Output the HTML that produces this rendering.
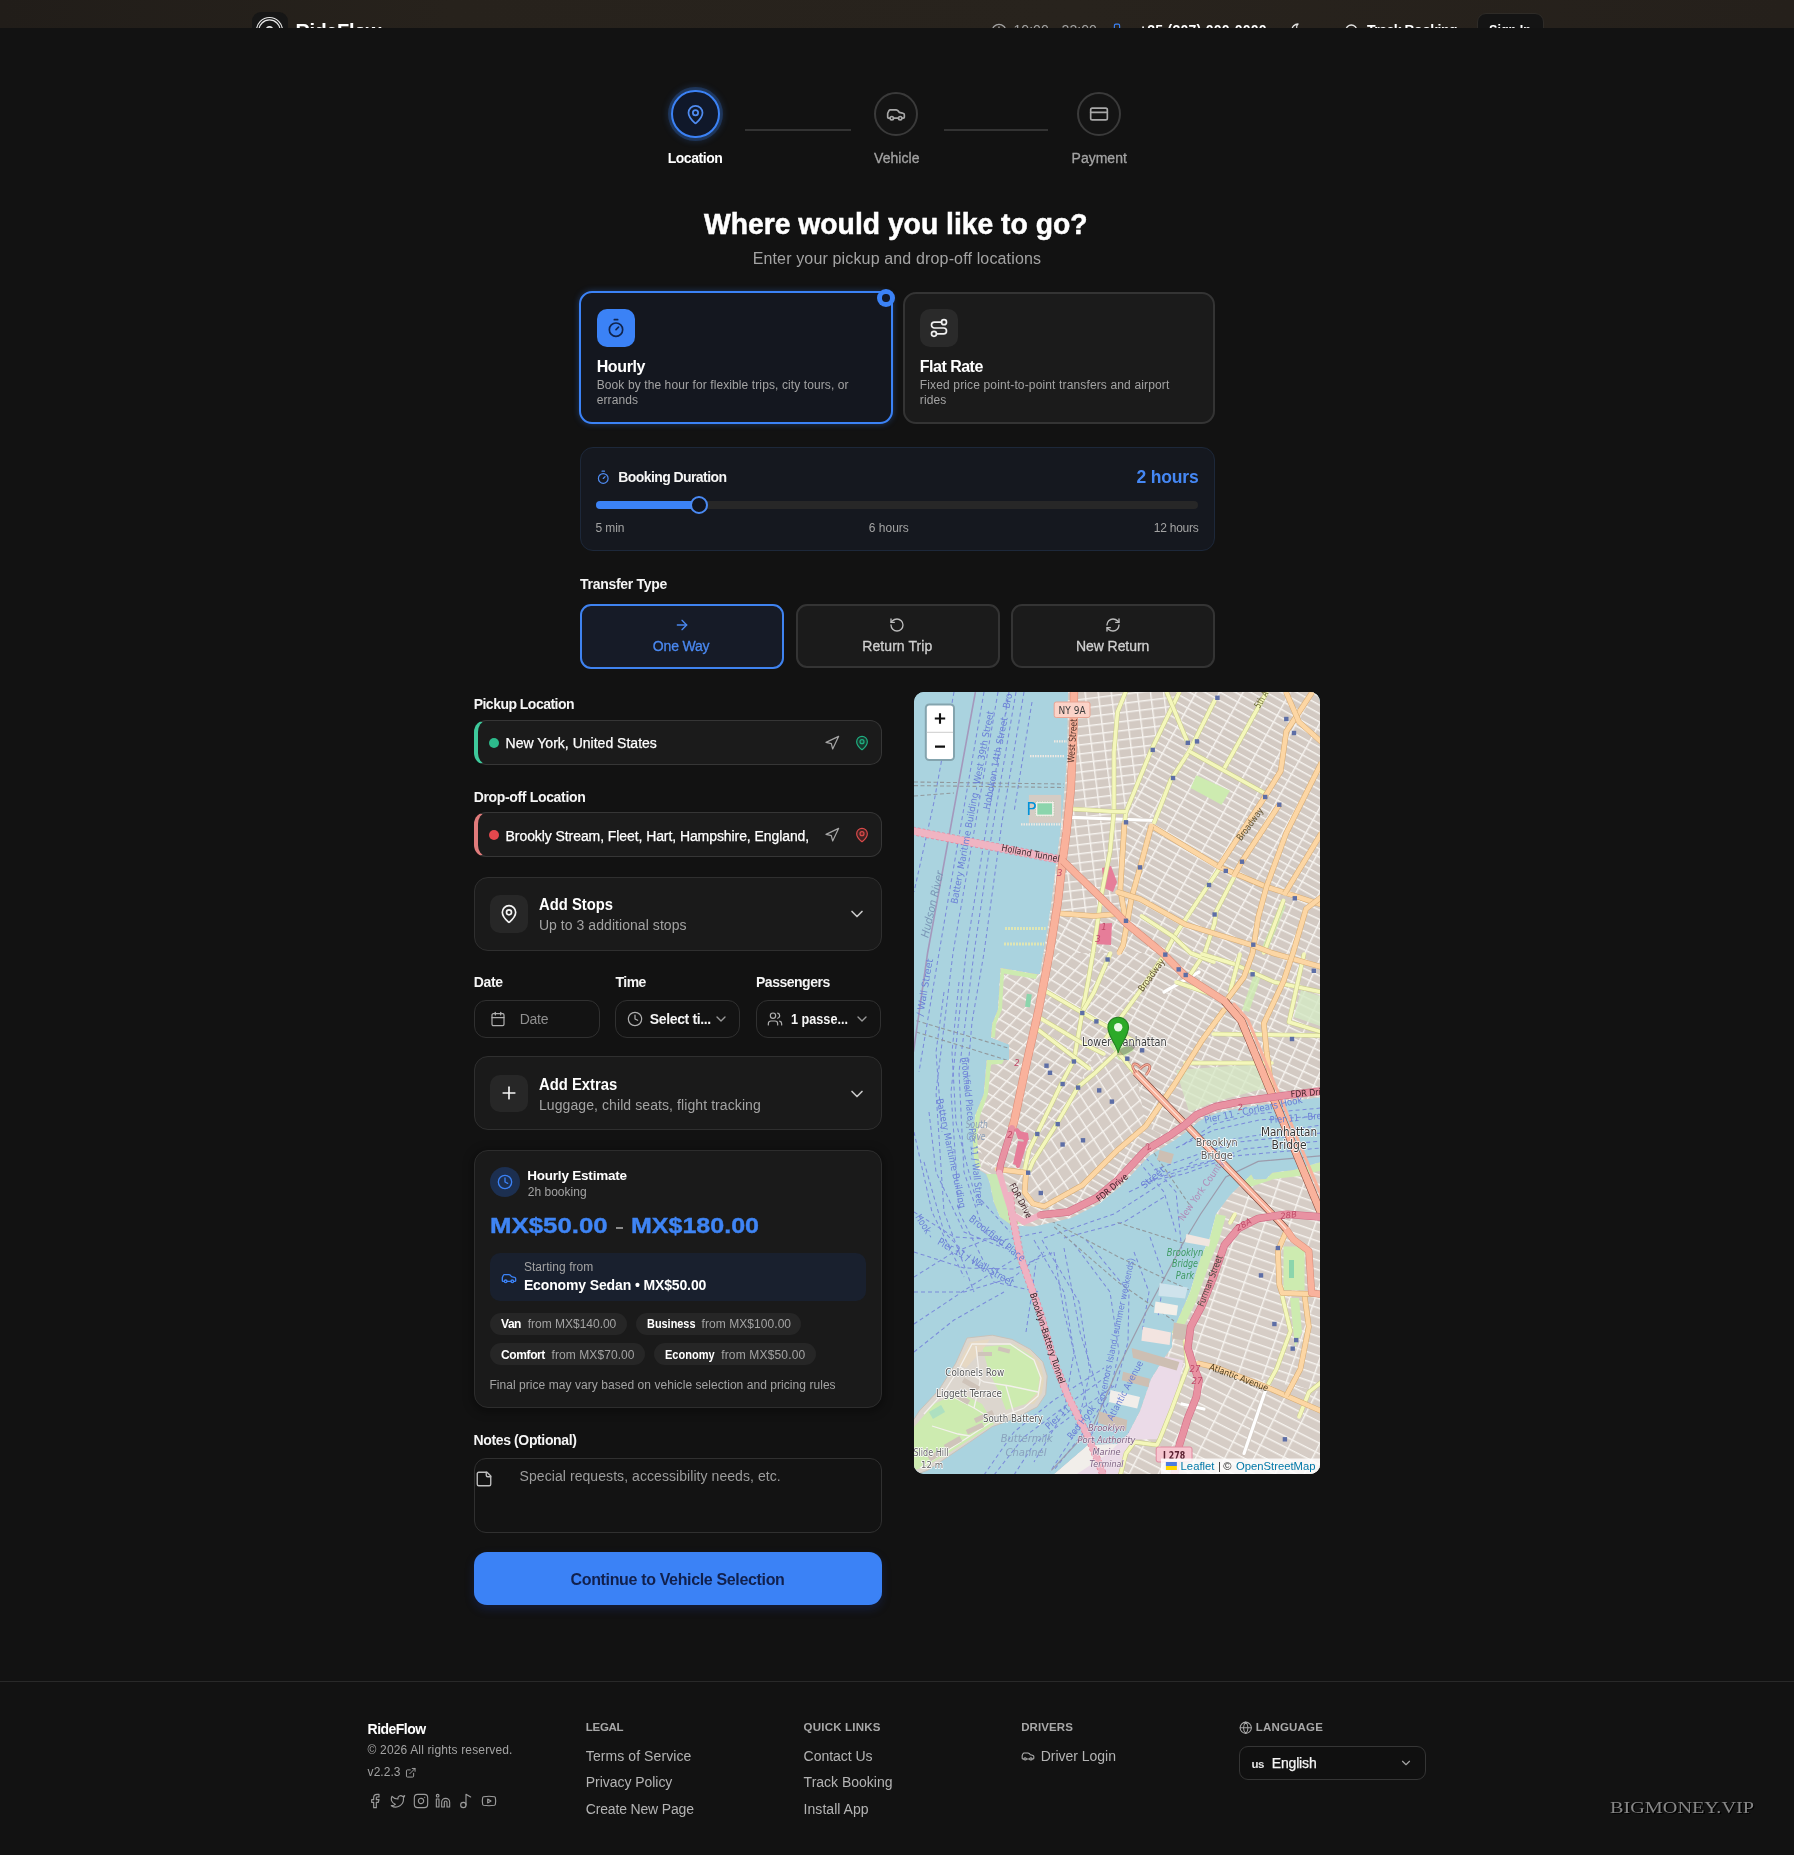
<!DOCTYPE html>
<html lang="en"><head><meta charset="utf-8"><title>RideFlow - Book a ride</title>
<style>
html,body{margin:0;padding:0;background:#121212;width:1794px;height:1855px;}
body{position:relative;font-family:"Liberation Sans",sans-serif;}
#pg{position:absolute;left:0;top:0;width:1794px;height:1855px;overflow:hidden;background:#121212;will-change:transform;}
#pg div,#pg svg,#pg span{position:absolute;box-sizing:border-box;}
#pg span{white-space:pre;line-height:1;}
#pg .serif{font-family:"Liberation Serif",serif;}
#map svg{position:static;}
#map text{font-family:"DejaVu Sans","Liberation Sans",sans-serif;}
</style></head>
<body>
<div id="pg">
<div style="left:0;top:0;width:1794px;height:28px;overflow:hidden;background:linear-gradient(90deg,#211d19 0%,#27221c 25%,#28231d 60%,#25201b 100%);">
<div style="left:252px;top:11.6px;width:36px;height:36px;border-radius:9px;background:#161616;"></div>
<svg style="left:254px;top:14.6px" width="31" height="31" viewBox="0 0 31 31" fill="none" stroke="#e8e8e8"><circle cx="15.5" cy="15.5" r="13" stroke-width="1.2"/><circle cx="15.5" cy="15.5" r="10.6" stroke-width="1.2"/><circle cx="15.5" cy="15.5" r="3.6" stroke-width="1.6"/></svg>
<span style="left:295.40px;top:20.63px;font-size:20px;font-weight:700;color:#ffffff;letter-spacing:-0.411px;">RideFlow</span>
<svg style="left:990.7px;top:22.6px;" width="16" height="16" viewBox="0 0 24 24" fill="none" stroke="#a3a3a3" stroke-width="2" stroke-linecap="round" stroke-linejoin="round"><circle cx="12" cy="12" r="10"/><polyline points="12 6 12 12 16 14"/></svg>
<span style="left:1013.40px;top:23.36px;font-size:14px;font-weight:400;color:#a3a3a3;letter-spacing:0.083px;">10:00 - 22:00</span>
<svg style="left:1109.7px;top:23.4px;" width="14" height="14" viewBox="0 0 24 24" fill="none" stroke="#3b82f6" stroke-width="2" stroke-linecap="round" stroke-linejoin="round"><rect width="9" height="20" x="7.5" y="2" rx="2.5"/></svg>
<span style="left:1138.90px;top:23.36px;font-size:14px;font-weight:700;color:#ffffff;letter-spacing:0.257px;">+25 (207) 000-0000</span>
<svg style="left:1290.0px;top:22.4px;" width="16" height="16" viewBox="0 0 24 24" fill="none" stroke="#e5e5e5" stroke-width="2" stroke-linecap="round" stroke-linejoin="round"><path d="M12 3a6 6 0 0 0 9 9 9 9 0 1 1-9-9Z"/></svg>
<svg style="left:1343.5px;top:23.0px;" width="16" height="16" viewBox="0 0 24 24" fill="none" stroke="#e5e5e5" stroke-width="2" stroke-linecap="round" stroke-linejoin="round"><circle cx="11" cy="11" r="8"/><path d="m21 21-4.300-4.300"/></svg>
<span style="left:1367.00px;top:23.36px;font-size:14px;font-weight:700;color:#ffffff;letter-spacing:-0.498px;">Track Booking</span>
<div style="left:1476.5px;top:13.4px;width:67px;height:34px;border-radius:9px;background:#141414;border:1px solid #2e2b27;"></div>
<span style="left:1488.70px;top:23.36px;font-size:14px;font-weight:700;color:#ffffff;transform:scaleX(0.8999);transform-origin:0 50%;">Sign In</span>
</div>
<div style="left:671.4px;top:90.1px;width:48.4px;height:48.4px;border-radius:50%;border:2px solid #3b82f6;background:#10182a;box-shadow:0 0 0 3px rgba(59,130,246,.22),0 0 7px 3px rgba(59,130,246,.22);"></div>
<svg style="left:685.1px;top:104.0px;" width="21" height="21" viewBox="0 0 24 24" fill="none" stroke="#4f8bf0" stroke-width="2" stroke-linecap="round" stroke-linejoin="round"><path d="M20 10c0 4.993-5.539 10.193-7.399 11.799a1 1 0 0 1-1.202 0C9.539 20.193 4 14.993 4 10a8 8 0 0 1 16 0"/><circle cx="12" cy="10" r="3"/></svg>
<div style="left:874.4px;top:92.4px;width:44px;height:44px;border-radius:50%;border:2px solid #3a3a3a;background:#141414;"></div>
<svg style="left:886.4px;top:104.4px;" width="20" height="20" viewBox="0 0 24 24" fill="none" stroke="#a8a8a8" stroke-width="2" stroke-linecap="round" stroke-linejoin="round"><path d="M19 17h2c.6 0 1-.4 1-1v-3c0-.9-.7-1.700-1.500-1.900C18.700 10.600 16 10 16 10s-1.300-1.400-2.200-2.300c-.5-.4-1.100-.7-1.800-.7H5c-.6 0-1.100.4-1.400.9l-1.400 2.900A3.700 3.700 0 0 0 2 12v4c0 .6.400 1 1 1h2"/><circle cx="7" cy="17" r="2"/><path d="M9 17h6"/><circle cx="17" cy="17" r="2"/></svg>
<div style="left:1076.5px;top:92.4px;width:44px;height:44px;border-radius:50%;border:2px solid #3a3a3a;background:#141414;"></div>
<svg style="left:1088.5px;top:104.4px;" width="20" height="20" viewBox="0 0 24 24" fill="none" stroke="#a8a8a8" stroke-width="2" stroke-linecap="round" stroke-linejoin="round"><rect width="20" height="14" x="2" y="5" rx="2"/><line x1="2" x2="22" y1="10" y2="10"/></svg>
<div style="left:745.4px;top:128.5px;width:105.6px;height:2.0px;background:#333;"></div>
<div style="left:943.5px;top:128.5px;width:104.7px;height:2.0px;background:#333;"></div>
<span style="left:667.65px;top:150.96px;font-size:14px;font-weight:700;color:#ffffff;letter-spacing:-0.455px;">Location</span>
<span style="left:874.05px;top:150.96px;font-size:14px;font-weight:400;color:#a3a3a3;letter-spacing:0.049px;-webkit-text-stroke:0.3px currentColor;">Vehicle</span>
<span style="left:1071.60px;top:150.96px;font-size:14px;font-weight:400;color:#a3a3a3;letter-spacing:-0.007px;-webkit-text-stroke:0.3px currentColor;">Payment</span>
<span style="left:704.45px;top:208.69px;font-size:29.5px;font-weight:700;color:#ffffff;transform:scaleX(0.9590);transform-origin:0 50%;-webkit-text-stroke:0.5px #fff;">Where would you like to go?</span>
<span style="left:752.65px;top:250.88px;font-size:16px;font-weight:400;color:#a3a3a3;letter-spacing:0.149px;">Enter your pickup and drop-off locations</span>
<div style="left:579.2px;top:291.4px;width:313.7px;height:133px;border-radius:13px;border:2px solid #3b82f6;background:#14171f;box-shadow:0 0 6px rgba(59,130,246,.35);"></div>
<div style="left:596.7px;top:308.9px;width:38.2px;height:38.2px;border-radius:10px;background:#3b82f6;"></div>
<svg style="left:605.8px;top:317.6px;" width="20" height="20" viewBox="0 0 24 24" fill="none" stroke="#10244d" stroke-width="2" stroke-linecap="round" stroke-linejoin="round"><line x1="10" x2="14" y1="2" y2="2"/><line x1="12" x2="15" y1="14" y2="11"/><circle cx="12" cy="14" r="8"/></svg>
<div style="left:876.8px;top:288.7px;width:18.4px;height:18.4px;border-radius:50%;background:#3b82f6;"></div>
<div style="left:882.3px;top:294.2px;width:7.4px;height:7.4px;border-radius:50%;background:#121827;"></div>
<span style="left:596.70px;top:359.18px;font-size:16px;font-weight:700;color:#ffffff;letter-spacing:-0.379px;">Hourly</span>
<span style="left:596.70px;top:379.14px;font-size:12px;font-weight:400;color:#a3a3a3;letter-spacing:0.102px;">Book by the hour for flexible trips, city tours, or</span>
<span style="left:596.70px;top:393.94px;font-size:12px;font-weight:400;color:#a3a3a3;letter-spacing:0.1px;">errands</span>
<div style="left:903.3px;top:292.4px;width:311.8px;height:131.9px;border-radius:13px;border:2px solid #343434;background:#1b1b1b;"></div>
<div style="left:920.2px;top:308.9px;width:37.8px;height:38.2px;border-radius:10px;background:#2a2a2a;"></div>
<svg style="left:929.1px;top:318.0px;" width="20" height="20" viewBox="0 0 24 24" fill="none" stroke="#f0f0f0" stroke-width="2" stroke-linecap="round" stroke-linejoin="round"><circle cx="6" cy="19" r="3"/><path d="M9 19h8.500a3.500 3.500 0 0 0 0-7h-11a3.500 3.500 0 0 1 0-7H15"/><circle cx="18" cy="5" r="3"/></svg>
<span style="left:919.80px;top:359.18px;font-size:16px;font-weight:700;color:#ffffff;letter-spacing:-0.509px;">Flat Rate</span>
<span style="left:919.80px;top:379.14px;font-size:12px;font-weight:400;color:#a3a3a3;letter-spacing:0.142px;">Fixed price point-to-point transfers and airport</span>
<span style="left:919.80px;top:393.94px;font-size:12px;font-weight:400;color:#a3a3a3;letter-spacing:0.1px;">rides</span>
<div style="left:580.1px;top:447.4px;width:635px;height:103.9px;border-radius:13px;border:1px solid #1d283a;background:#15181f;"></div>
<svg style="left:595.9px;top:469.6px;" width="14.5" height="14.5" viewBox="0 0 24 24" fill="none" stroke="#4f8bf0" stroke-width="2" stroke-linecap="round" stroke-linejoin="round"><line x1="10" x2="14" y1="2" y2="2"/><line x1="12" x2="15" y1="14" y2="11"/><circle cx="12" cy="14" r="8"/></svg>
<span style="left:618.20px;top:469.96px;font-size:14px;font-weight:700;color:#f5f5f5;letter-spacing:-0.577px;">Booking Duration</span>
<span style="left:1136.50px;top:468.75px;font-size:17.5px;font-weight:700;color:#4587f3;letter-spacing:-0.174px;">2 hours</span>
<div style="left:595.8px;top:501.3px;width:602.7px;height:8.0px;border-radius:4px;background:#272727;"></div>
<div style="left:595.8px;top:501.3px;width:103.0px;height:8.0px;border-radius:4px;background:#3b82f6;"></div>
<div style="left:690.3px;top:496.1px;width:18px;height:18px;border-radius:50%;border:2px solid #4a8af4;background:#10141f;"></div>
<span style="left:595.40px;top:522.34px;font-size:12px;font-weight:400;color:#a3a3a3;letter-spacing:-0.069px;">5 min</span>
<span style="left:868.80px;top:522.34px;font-size:12px;font-weight:400;color:#a3a3a3;">6 hours</span>
<span style="left:1153.80px;top:522.34px;font-size:12px;font-weight:400;color:#a3a3a3;letter-spacing:-0.250px;">12 hours</span>
<span style="left:580.10px;top:576.76px;font-size:14px;font-weight:700;color:#f5f5f5;letter-spacing:-0.291px;">Transfer Type</span>
<div style="left:580.1px;top:604px;width:203.8px;height:64.9px;border-radius:11px;border:2px solid #3f83f0;background:#161b27;"></div>
<svg style="left:674.0px;top:617.3px;" width="16" height="16" viewBox="0 0 24 24" fill="none" stroke="#4a88f0" stroke-width="2" stroke-linecap="round" stroke-linejoin="round"><path d="M5 12h14"/><path d="m12 5 7 7-7 7"/></svg>
<span style="left:652.85px;top:639.36px;font-size:14px;font-weight:400;color:#4a88f0;letter-spacing:-0.192px;-webkit-text-stroke:0.3px currentColor;">One Way</span>
<div style="left:795.6px;top:604.4px;width:204.4px;height:64px;border-radius:11px;border:2px solid #343434;background:#1b1b1b;"></div>
<svg style="left:889.1px;top:617.1px;" width="16" height="16" viewBox="0 0 24 24" fill="none" stroke="#bdbdbd" stroke-width="2" stroke-linecap="round" stroke-linejoin="round"><path d="M3 12a9 9 0 1 0 9-9 9.750 9.750 0 0 0-6.740 2.740L3 8"/><path d="M3 3v5h5"/></svg>
<span style="left:862.30px;top:639.36px;font-size:14px;font-weight:400;color:#d0d0d0;letter-spacing:0.068px;-webkit-text-stroke:0.3px currentColor;">Return Trip</span>
<div style="left:1011.3px;top:604.4px;width:203.6px;height:64px;border-radius:11px;border:2px solid #343434;background:#1b1b1b;"></div>
<svg style="left:1104.6px;top:617.1px;" width="16" height="16" viewBox="0 0 24 24" fill="none" stroke="#bdbdbd" stroke-width="2" stroke-linecap="round" stroke-linejoin="round"><path d="M3 12a9 9 0 0 1 9-9 9.750 9.750 0 0 1 6.740 2.740L21 8"/><path d="M21 3v5h-5"/><path d="M21 12a9 9 0 0 1-9 9 9.750 9.750 0 0 1-6.740-2.740L3 16"/><path d="M8 16H3v5"/></svg>
<span style="left:1076.00px;top:639.36px;font-size:14px;font-weight:400;color:#d0d0d0;letter-spacing:-0.072px;-webkit-text-stroke:0.3px currentColor;">New Return</span>
<span style="left:473.70px;top:697.16px;font-size:14px;font-weight:700;color:#f5f5f5;letter-spacing:-0.522px;">Pickup Location</span>
<div style="left:473.7px;top:720.2px;width:408.3px;height:44.5px;border-radius:12px;border:1.5px solid #363636;border-left:4px solid #3ec99b;background:#1b1b1b;"></div>
<div style="left:488.7px;top:737.6px;width:10.2px;height:10.2px;border-radius:50%;background:#2dbb8c;"></div>
<span style="left:505.60px;top:736.46px;font-size:14px;font-weight:400;color:#ffffff;letter-spacing:0.014px;-webkit-text-stroke:0.25px #fff;">New York, United States</span>
<svg style="left:823.8px;top:734.6px;" width="16" height="16" viewBox="0 0 24 24" fill="none" stroke="#a6a6a6" stroke-width="1.8" stroke-linecap="round" stroke-linejoin="round"><polygon points="3 11 22 2 13 21 11 13 3 11"/></svg>
<svg style="left:853.5px;top:734.9px;" width="16" height="16" viewBox="0 0 24 24" fill="rgba(16,185,129,.18)" stroke="#1fae80" stroke-width="1.8" stroke-linecap="round" stroke-linejoin="round"><path d="M20 10c0 4.993-5.539 10.193-7.399 11.799a1 1 0 0 1-1.202 0C9.539 20.193 4 14.993 4 10a8 8 0 0 1 16 0"/><circle cx="12" cy="10" r="3"/></svg>
<span style="left:473.70px;top:789.66px;font-size:14px;font-weight:700;color:#f5f5f5;letter-spacing:-0.337px;">Drop-off Location</span>
<div style="left:473.7px;top:812.4px;width:408.3px;height:44.6px;border-radius:12px;border:1.5px solid #363636;border-left:4px solid #e07b7b;background:#1b1b1b;"></div>
<div style="left:488.7px;top:830.1px;width:10.2px;height:10.2px;border-radius:50%;background:#e4484d;"></div>
<span style="left:505.60px;top:828.96px;font-size:14px;font-weight:400;color:#ffffff;letter-spacing:-0.080px;-webkit-text-stroke:0.25px #fff;">Brookly Stream, Fleet, Hart, Hampshire, England,</span>
<svg style="left:823.8px;top:827.1px;" width="16" height="16" viewBox="0 0 24 24" fill="none" stroke="#a6a6a6" stroke-width="1.8" stroke-linecap="round" stroke-linejoin="round"><polygon points="3 11 22 2 13 21 11 13 3 11"/></svg>
<svg style="left:853.5px;top:827.4px;" width="16" height="16" viewBox="0 0 24 24" fill="rgba(239,68,68,.18)" stroke="#d94a4a" stroke-width="1.8" stroke-linecap="round" stroke-linejoin="round"><path d="M20 10c0 4.993-5.539 10.193-7.399 11.799a1 1 0 0 1-1.202 0C9.539 20.193 4 14.993 4 10a8 8 0 0 1 16 0"/><circle cx="12" cy="10" r="3"/></svg>
<div style="left:473.7px;top:877px;width:408.5px;height:73.9px;border-radius:14px;border:1px solid #2f2f2f;background:#1a1a1a;"></div>
<div style="left:490.1px;top:895.1px;width:37.6px;height:37.6px;border-radius:10px;background:#272727;"></div>
<svg style="left:498.7px;top:903.7px;" width="20" height="20" viewBox="0 0 24 24" fill="none" stroke="#f5f5f5" stroke-width="2" stroke-linecap="round" stroke-linejoin="round"><path d="M20 10c0 4.993-5.539 10.193-7.399 11.799a1 1 0 0 1-1.202 0C9.539 20.193 4 14.993 4 10a8 8 0 0 1 16 0"/><circle cx="12" cy="10" r="3"/></svg>
<span style="left:538.90px;top:896.98px;font-size:16px;font-weight:700;color:#ffffff;transform:scaleX(0.9250);transform-origin:0 50%;">Add Stops</span>
<span style="left:538.90px;top:918.16px;font-size:14px;font-weight:400;color:#a3a3a3;letter-spacing:0.057px;">Up to 3 additional stops</span>
<svg style="left:846.9px;top:904.0px;" width="20" height="20" viewBox="0 0 24 24" fill="none" stroke="#c8c8c8" stroke-width="2" stroke-linecap="round" stroke-linejoin="round"><path d="m6 9 6 6 6-6"/></svg>
<span style="left:473.70px;top:975.06px;font-size:14px;font-weight:700;color:#f5f5f5;letter-spacing:-0.340px;">Date</span>
<span style="left:615.50px;top:975.06px;font-size:14px;font-weight:700;color:#f5f5f5;letter-spacing:-0.509px;">Time</span>
<span style="left:756.00px;top:975.06px;font-size:14px;font-weight:700;color:#f5f5f5;letter-spacing:-0.491px;">Passengers</span>
<div style="left:474.2px;top:999.6px;width:125.4px;height:38px;border-radius:12px;border:1px solid #303030;background:#131313;"></div>
<svg style="left:489.6px;top:1010.8px;" width="16" height="16" viewBox="0 0 24 24" fill="none" stroke="#b0b0b0" stroke-width="1.8" stroke-linecap="round" stroke-linejoin="round"><path d="M8 2v4"/><path d="M16 2v4"/><rect width="18" height="18" x="3" y="4" rx="2"/><path d="M3 10h18"/></svg>
<span style="left:519.80px;top:1011.96px;font-size:14px;font-weight:400;color:#8f8f8f;letter-spacing:-0.295px;">Date</span>
<div style="left:615px;top:999.6px;width:125.2px;height:38px;border-radius:12px;border:1px solid #303030;background:#131313;"></div>
<svg style="left:626.5px;top:1010.8px;" width="16" height="16" viewBox="0 0 24 24" fill="none" stroke="#b0b0b0" stroke-width="1.8" stroke-linecap="round" stroke-linejoin="round"><circle cx="12" cy="12" r="10"/><polyline points="12 6 12 12 16 14"/></svg>
<span style="left:649.80px;top:1011.96px;font-size:14px;font-weight:700;color:#f5f5f5;letter-spacing:-0.363px;">Select ti...</span>
<svg style="left:712.7px;top:1011.0px;" width="16" height="16" viewBox="0 0 24 24" fill="none" stroke="#9a9a9a" stroke-width="2" stroke-linecap="round" stroke-linejoin="round"><path d="m6 9 6 6 6-6"/></svg>
<div style="left:756px;top:999.8px;width:125.4px;height:38px;border-radius:12px;border:1px solid #303030;background:#131313;"></div>
<svg style="left:767.3px;top:1011.0px;" width="16" height="16" viewBox="0 0 24 24" fill="none" stroke="#b0b0b0" stroke-width="1.8" stroke-linecap="round" stroke-linejoin="round"><path d="M16 21v-2a4 4 0 0 0-4-4H6a4 4 0 0 0-4 4v2"/><circle cx="9" cy="7" r="4"/><path d="M22 21v-2a4 4 0 0 0-3-3.870"/><path d="M16 3.130a4 4 0 0 1 0 7.750"/></svg>
<span style="left:791.20px;top:1011.96px;font-size:14px;font-weight:700;color:#f5f5f5;transform:scaleX(0.9041);transform-origin:0 50%;">1 passe...</span>
<svg style="left:853.7px;top:1011.0px;" width="16" height="16" viewBox="0 0 24 24" fill="none" stroke="#9a9a9a" stroke-width="2" stroke-linecap="round" stroke-linejoin="round"><path d="m6 9 6 6 6-6"/></svg>
<div style="left:473.7px;top:1056.4px;width:408.5px;height:73.9px;border-radius:14px;border:1px solid #2f2f2f;background:#1a1a1a;"></div>
<div style="left:490.1px;top:1074.8px;width:37.6px;height:37.6px;border-radius:10px;background:#272727;"></div>
<svg style="left:498.7px;top:1083.4px;" width="20" height="20" viewBox="0 0 24 24" fill="none" stroke="#f5f5f5" stroke-width="2" stroke-linecap="round" stroke-linejoin="round"><path d="M5 12h14"/><path d="M12 5v14"/></svg>
<span style="left:538.90px;top:1076.68px;font-size:16px;font-weight:700;color:#ffffff;transform:scaleX(0.9270);transform-origin:0 50%;">Add Extras</span>
<span style="left:538.90px;top:1097.96px;font-size:14px;font-weight:400;color:#a3a3a3;letter-spacing:0.089px;">Luggage, child seats, flight tracking</span>
<svg style="left:846.9px;top:1083.6px;" width="20" height="20" viewBox="0 0 24 24" fill="none" stroke="#c8c8c8" stroke-width="2" stroke-linecap="round" stroke-linejoin="round"><path d="m6 9 6 6 6-6"/></svg>
<div style="left:473.7px;top:1149.5px;width:408.7px;height:258.3px;border-radius:14px;border:1px solid #2d2d2d;background:#1a1a1a;box-shadow:0 2px 10px 2px rgba(0,0,0,.35);"></div>
<div style="left:490.1px;top:1167.4px;width:29.8px;height:29.8px;border-radius:50%;background:#1c2f50;"></div>
<svg style="left:497.0px;top:1174.3px;" width="16" height="16" viewBox="0 0 24 24" fill="none" stroke="#3b82f6" stroke-width="2" stroke-linecap="round" stroke-linejoin="round"><circle cx="12" cy="12" r="10"/><polyline points="12 6 12 12 16 14"/></svg>
<span style="left:527.20px;top:1168.91px;font-size:13.5px;font-weight:700;color:#ffffff;letter-spacing:-0.205px;">Hourly Estimate</span>
<span style="left:527.70px;top:1185.74px;font-size:12px;font-weight:400;color:#a3a3a3;letter-spacing:0.028px;">2h booking</span>
<span style="left:489.70px;top:1214.51px;font-size:22.5px;font-weight:700;color:#3f85f5;transform:scaleX(1.1474);transform-origin:0 50%;-webkit-text-stroke:0.4px #3f85f5;">MX$50.00</span>
<div style="left:615.5px;top:1227.3px;width:7.5px;height:1.8px;background:#8a8a8a;"></div>
<span style="left:631.40px;top:1214.51px;font-size:22.5px;font-weight:700;color:#3f85f5;transform:scaleX(1.1121);transform-origin:0 50%;-webkit-text-stroke:0.4px #3f85f5;">MX$180.00</span>
<div style="left:490.1px;top:1252.7px;width:376px;height:48.5px;border-radius:10px;background:#19202e;"></div>
<svg style="left:500.9px;top:1269.6px;" width="16" height="16" viewBox="0 0 24 24" fill="none" stroke="#3b82f6" stroke-width="2" stroke-linecap="round" stroke-linejoin="round"><path d="M19 17h2c.6 0 1-.4 1-1v-3c0-.9-.7-1.700-1.500-1.900C18.700 10.600 16 10 16 10s-1.300-1.400-2.200-2.300c-.5-.4-1.100-.7-1.800-.7H5c-.6 0-1.100.4-1.400.9l-1.400 2.900A3.700 3.700 0 0 0 2 12v4c0 .6.400 1 1 1h2"/><circle cx="7" cy="17" r="2"/><path d="M9 17h6"/><circle cx="17" cy="17" r="2"/></svg>
<span style="left:523.90px;top:1261.14px;font-size:12px;font-weight:400;color:#a3a3a3;letter-spacing:0.061px;">Starting from</span>
<span style="left:523.90px;top:1277.66px;font-size:14px;font-weight:700;color:#ffffff;letter-spacing:-0.130px;">Economy Sedan &bull; MX$50.00</span>
<div style="left:490.1px;top:1312.9px;width:137.4px;height:22.4px;border-radius:11.2px;background:#262626;"></div>
<span style="left:501.00px;top:1318.44px;font-size:12px;font-weight:700;color:#ffffff;letter-spacing:-0.453px;">Van</span>
<span style="left:527.70px;top:1318.44px;font-size:12px;font-weight:400;color:#a3a3a3;letter-spacing:-0.008px;">from MX$140.00</span>
<div style="left:635.9px;top:1312.9px;width:165.5px;height:22.4px;border-radius:11.2px;background:#262626;"></div>
<span style="left:646.90px;top:1318.44px;font-size:12px;font-weight:700;color:#ffffff;transform:scaleX(0.9089);transform-origin:0 50%;">Business</span>
<span style="left:701.60px;top:1318.44px;font-size:12px;font-weight:400;color:#a3a3a3;letter-spacing:0.056px;">from MX$100.00</span>
<div style="left:490.1px;top:1343.1px;width:155.2px;height:22.4px;border-radius:11.2px;background:#262626;"></div>
<span style="left:501.00px;top:1348.64px;font-size:12px;font-weight:700;color:#ffffff;letter-spacing:-0.382px;">Comfort</span>
<span style="left:551.60px;top:1348.64px;font-size:12px;font-weight:400;color:#a3a3a3;letter-spacing:0.073px;">from MX$70.00</span>
<div style="left:654px;top:1343.1px;width:162.1px;height:22.4px;border-radius:11.2px;background:#262626;"></div>
<span style="left:665.30px;top:1348.64px;font-size:12px;font-weight:700;color:#ffffff;transform:scaleX(0.9201);transform-origin:0 50%;">Economy</span>
<span style="left:721.20px;top:1348.64px;font-size:12px;font-weight:400;color:#a3a3a3;letter-spacing:0.166px;">from MX$50.00</span>
<span style="left:489.40px;top:1378.94px;font-size:12px;font-weight:400;color:#a3a3a3;letter-spacing:0.053px;">Final price may vary based on vehicle selection and pricing rules</span>
<span style="left:473.50px;top:1433.06px;font-size:14px;font-weight:700;color:#f5f5f5;letter-spacing:-0.368px;">Notes (Optional)</span>
<div style="left:474px;top:1457.8px;width:408.4px;height:74.8px;border-radius:12px;border:1px solid #303030;background:#131313;"></div>
<svg style="left:474.7px;top:1469.7px;" width="18" height="18" viewBox="0 0 24 24" fill="none" stroke="#c0c0c0" stroke-width="1.8" stroke-linecap="round" stroke-linejoin="round"><path d="M16 3H5a2 2 0 0 0-2 2v14a2 2 0 0 0 2 2h14a2 2 0 0 0 2-2V8Z"/><path d="M15 3v4a2 2 0 0 0 2 2h4"/></svg>
<span style="left:519.60px;top:1469.06px;font-size:14px;font-weight:400;color:#9c9c9c;letter-spacing:0.066px;">Special requests, accessibility needs, etc.</span>
<div style="left:474px;top:1552.3px;width:408.4px;height:53.2px;border-radius:13px;background:#3b82f6;box-shadow:0 4px 10px rgba(30,64,175,.25);"></div>
<span style="left:570.50px;top:1572.38px;font-size:16px;font-weight:700;color:#11204d;letter-spacing:-0.346px;">Continue to Vehicle Selection</span>
<div id="map" style="left:913.5px;top:691.8px;width:406.5px;height:782px;border-radius:10px;overflow:hidden;background:#aad3df;"><svg width="407" height="782" viewBox="0 0 407 782" style="display:block"><defs><pattern id="gm" width="20.5" height="7.4" patternUnits="userSpaceOnUse" patternTransform="rotate(29) translate(0.3,-0.9)"><rect width="20.5" height="7.4" fill="#d3cac3"/><rect width="20.5" height="1.45" fill="#f6f3ef"/><rect width="1.4" height="7.4" fill="#f6f3ef"/></pattern><pattern id="gw" width="13" height="9" patternUnits="userSpaceOnUse" patternTransform="rotate(-7)"><rect width="13" height="9" fill="#d3cac3"/><rect width="13" height="1.45" fill="#f6f3ef"/><rect width="1.4" height="9" fill="#f6f3ef"/></pattern><pattern id="gt" width="12" height="10" patternUnits="userSpaceOnUse" patternTransform="rotate(30) skewX(-12)"><rect width="12" height="10" fill="#d3cac3"/><rect width="12" height="1.45" fill="#f6f3ef"/><rect width="1.4" height="10" fill="#f6f3ef"/></pattern><pattern id="gb" width="24" height="9" patternUnits="userSpaceOnUse" patternTransform="rotate(19)"><rect width="24" height="9" fill="#d6cdc6"/><rect width="24" height="1.45" fill="#f6f3ef"/><rect width="1.4" height="9" fill="#f6f3ef"/></pattern><pattern id="gc" width="26" height="9.5" patternUnits="userSpaceOnUse" patternTransform="rotate(27)"><rect width="26" height="9.5" fill="#d6cdc6"/><rect width="26" height="1.45" fill="#f6f3ef"/><rect width="1.4" height="9.5" fill="#f6f3ef"/></pattern><pattern id="gf" width="14" height="12" patternUnits="userSpaceOnUse" patternTransform="rotate(58) skewX(8)"><rect width="14" height="12" fill="#d5ccc5"/><rect width="14" height="1.4" fill="#f6f3ef"/><rect width="1.4" height="12" fill="#f6f3ef"/></pattern><pattern id="gl" width="16" height="8.5" patternUnits="userSpaceOnUse" patternTransform="rotate(25)"><rect width="16" height="8.5" fill="#d3cac3"/><rect width="16" height="1.45" fill="#f6f3ef"/><rect width="1.4" height="8.5" fill="#f6f3ef"/></pattern><clipPath id="cm"><path d="M154.0,-2.0 L153.5,60.0 L150.5,100.0 L146.5,140.0 L142.5,169.0 L137.5,211.0 L129.5,261.0 L126.0,282.0 L123.3,282.3 L86.7,276.0 L84.0,317.5 L78.3,331.5 L77.0,345.6 L95.0,352.6 L95.0,368.0 L72.7,368.1 L69.8,401.9 L61.4,423.0 L58.6,444.1 L60.0,465.2 L62.8,476.5 L72.0,482.0 L75.5,490.0 L79.7,510.0 L86.0,525.0 L98.0,533.5 L120.0,534.5 L140.0,530.0 L157.0,526.0 L185.0,512.0 L207.0,494.0 L235.0,464.0 L260.0,448.5 L274.0,438.5 L285.0,429.0 L304.0,420.5 L331.0,415.0 L373.0,409.3 L409.0,405.0 L409.0,-2.0Z"/></clipPath><clipPath id="cb"><path d="M409.0,469.4 L379.4,477.9 L358.3,480.7 L352.0,487.0 L340.0,487.5 L337.2,482.5 L327.3,492.0 L316.0,503.2 L302.0,522.0 L296.0,545.0 L287.0,565.0 L282.0,580.0 L276.0,600.0 L265.0,625.0 L258.0,640.0 L258.0,655.0 L251.3,664.3 L237.0,687.0 L226.0,719.0 L214.0,742.0 L203.5,752.0 L174.0,753.0 L138.0,784.0 L409.0,784.0Z"/></clipPath></defs><rect width="407" height="782" fill="#aad3df"/><g fill="none" stroke="#7684da" stroke-width="1.05" stroke-dasharray="4 3" opacity=".9"><path d="M84.0,0.0 L60.0,140.0 L39.0,261.0 L22.0,400.0 L30.0,520.0 L60.0,600.0"/><path d="M102.0,0.0 L78.0,140.0 L60.0,261.0 L45.0,380.0 L50.0,480.0 L70.0,540.0 L98.0,560.0"/><path d="M70.0,0.0 L44.0,150.0 L25.0,261.0 L5.0,380.0"/><path d="M95.0,0.0 L70.0,150.0 L52.0,261.0 L37.0,400.0 L45.0,520.0 L80.0,590.0 L125.0,600.0"/><path d="M110.0,0.0 L88.0,130.0 L70.0,261.0 L58.0,330.0 L52.0,400.0"/><path d="M118.0,10.0 L100.0,120.0"/><path d="M40.0,0.0 L20.0,110.0 L0.0,200.0"/><path d="M270.0,452.0 L300.0,432.0 L340.0,422.0 L407.0,416.0"/><path d="M275.0,472.0 L320.0,447.0 L407.0,433.0"/><path d="M250.0,484.0 L290.0,472.0 L330.0,457.0 L407.0,449.0"/><path d="M215.0,500.0 L260.0,478.0 L300.0,468.0"/><path d="M130.0,546.0 L200.0,522.0 L262.0,482.0"/><path d="M140.0,560.0 L150.0,620.0 L170.0,700.0 L182.0,760.0"/><path d="M150.0,556.0 L166.0,640.0 L186.0,705.0 L200.0,740.0"/><path d="M160.0,552.0 L196.0,600.0 L205.0,660.0 L196.0,700.0 L170.0,740.0 L140.0,778.0"/><path d="M172.0,548.0 L215.0,600.0 L214.0,650.0 L200.0,700.0 L176.0,745.0"/><path d="M0.0,632.0 L60.0,592.0 L112.0,560.0"/><path d="M0.0,560.0 L50.0,576.0 L100.0,577.0 L140.0,560.0"/><path d="M0.0,585.0 L40.0,560.0 L80.0,545.0"/><path d="M100.0,783.0 L120.0,752.0 L160.0,722.0 L200.0,694.0"/><path d="M80.0,783.0 L110.0,745.0 L150.0,715.0 L196.0,682.0"/><path d="M10.0,470.0 L30.0,540.0 L70.0,580.0"/><path d="M0.0,440.0 L18.0,520.0 L50.0,585.0"/><path d="M112.0,640.0 L118.0,600.0 L122.0,570.0"/><path d="M262.0,456.0 L300.0,438.0 L345.0,428.0 L407.0,424.0"/><path d="M240.0,478.0 L285.0,462.0 L325.0,450.0 L407.0,441.0"/><path d="M230.0,490.0 L270.0,482.0 L320.0,464.0 L407.0,456.0"/><path d="M225.0,470.0 L250.0,500.0 L262.0,540.0"/><path d="M232.0,466.0 L262.0,500.0 L268.0,560.0"/><path d="M150.0,546.0 L210.0,530.0 L250.0,505.0"/><path d="M120.0,548.0 L150.0,600.0 L160.0,660.0 L150.0,720.0 L120.0,770.0"/><path d="M128.0,548.0 L165.0,610.0 L176.0,680.0 L162.0,740.0 L136.0,780.0"/><path d="M0.0,600.0 L50.0,600.0 L100.0,585.0 L130.0,560.0"/><path d="M0.0,520.0 L40.0,545.0 L90.0,548.0 L128.0,540.0"/><path d="M15.0,420.0 L22.0,480.0 L50.0,540.0 L90.0,556.0"/><path d="M30.0,300.0 L22.0,360.0 L28.0,440.0"/><path d="M45.0,290.0 L38.0,360.0 L42.0,430.0 L60.0,500.0 L96.0,540.0"/><path d="M70.0,783.0 L100.0,740.0 L140.0,708.0 L190.0,676.0"/><path d="M190.0,783.0 L215.0,740.0"/><path d="M0.0,660.0 L40.0,628.0 L90.0,600.0"/><path d="M220.0,560.0 L235.0,600.0 L228.0,640.0"/><path d="M236.0,545.0 L250.0,585.0 L244.0,625.0"/></g><g fill="none" stroke="#8f9396" stroke-width="1.1" stroke-dasharray="4 2.5" opacity=".9"><path d="M0.0,90.0 L150.0,92.0"/><path d="M0.0,93.6 L150.0,95.5"/><path d="M2.3,328.7 L106.4,359.7"/><path d="M2.3,340.0 L106.4,372.3"/><path d="M137.4,529.2 L203.5,564.4 L275.0,598.0"/><path d="M140.2,534.9 L203.5,589.7 L260.0,629.0"/><path d="M203.5,530.6 L271.0,551.7"/><path d="M240.0,461.0 L277.0,515.0"/><path d="M0.0,104.0 L40.0,101.0"/></g><g fill="none" stroke="#a391b8" stroke-width="1.6" opacity=".9"><path d="M61.4,0.0 L13.6,261.0 L-0.5,359.7"/></g><g fill="none" stroke="#9a96a6" stroke-width="1.2" opacity=".9"><path d="M407.5,463.8 L344.2,469.4 L311.8,484.9 L286.5,522.2 L269.6,550.3 L231.6,620.7 L203.5,677.0 L179.6,733.2 L137.4,778.3"/></g><g stroke="#efe9e2" stroke-width="2.2" stroke-dasharray="1.5 1" fill="none"><path d="M140,49.4 L153,49.4"/><path d="M116,64.2 L150,64.2"/><path d="M107,132.4 L146,132.4"/></g><g stroke="#dfe6b5" stroke-width="3" stroke-dasharray="2 1" fill="none"><path d="M91,236.5 L131.7,236.5"/><path d="M90,252 L130,252"/></g><rect x="114.9" y="102.9" width="32.3" height="28" fill="#d5ccc4"/><rect x="121.5" y="109.5" width="18.5" height="14.8" fill="#f3efe9" stroke="#b9c9b0" stroke-width=".8" stroke-dasharray="1.5 1"/><rect x="123.3" y="111.3" width="14.8" height="11.3" fill="#8bd5ac"/><path d="M154.0,-2.0 L153.5,60.0 L150.5,100.0 L146.5,140.0 L142.5,169.0 L137.5,211.0 L129.5,261.0 L126.0,282.0 L123.3,282.3 L86.7,276.0 L84.0,317.5 L78.3,331.5 L77.0,345.6 L95.0,352.6 L95.0,368.0 L72.7,368.1 L69.8,401.9 L61.4,423.0 L58.6,444.1 L60.0,465.2 L62.8,476.5 L72.0,482.0 L75.5,490.0 L79.7,510.0 L86.0,525.0 L98.0,533.5 L120.0,534.5 L140.0,530.0 L157.0,526.0 L185.0,512.0 L207.0,494.0 L235.0,464.0 L260.0,448.5 L274.0,438.5 L285.0,429.0 L304.0,420.5 L331.0,415.0 L373.0,409.3 L409.0,405.0 L409.0,-2.0Z" fill="url(#gm)"/><g clip-path="url(#cm)"><path d="M150.0,-2.0 L265.4,-2.0 L237.3,57.9 L212.0,119.8 L210.5,131.0 L206.3,197.2 L204.0,222.0 L130.0,222.0 L140.0,131.0Z" fill="url(#gw)"/><path d="M125.0,261.0 L251.0,261.0 L226.0,299.0 L203.5,330.0 L182.0,360.0 L150.0,420.0 L119.0,470.0 L112.0,481.0 L80.0,481.0 L55.0,440.0 L80.0,270.0Z" fill="url(#gt)"/><path d="M338.6,261.0 L352.6,194.3 L409.0,212.6 L409.0,410.0 L300.0,418.0 L260.0,448.0 L231.6,434.2 L259.8,393.4 L288.0,348.4 L310.4,317.5 L330.0,285.0Z" fill="url(#gl)"/><path d="M112.0,481.0 L119.0,470.0 L150.0,420.0 L182.0,360.0 L222.0,381.0 L232.0,434.0 L203.5,458.0 L168.0,493.0 L130.0,514.0 L119.0,511.0 L110.0,500.0Z" fill="url(#gf)"/><path d="M282.3,83.2 L316.0,98.7 L307.6,112.7 L276.7,95.9Z" fill="#cdebb0"/><path d="M86.7,276.0 L123.3,282.3 L122.0,287.0 L90.0,281.5 L88.0,317.5 L82.0,332.0 L81.0,345.6 L77.0,345.6 L78.3,331.5 L84.0,317.5Z" fill="#cdebb0"/><path d="M72.7,368.1 L90.0,368.0 L88.0,372.0 L77.0,372.5 L74.0,402.0 L66.0,424.0 L63.0,444.0 L64.5,465.0 L67.0,475.0 L62.8,476.5 L60.0,465.2 L58.6,444.1 L61.4,423.0 L69.8,401.9Z" fill="#cdebb0"/><path d="M72.0,482.0 L84.0,482.0 L90.0,500.0 L96.0,520.0 L110.0,531.0 L98.0,533.5 L86.0,525.0 L79.7,510.0 L75.5,490.0Z" fill="#c8e8b4"/><rect x="112" y="302" width="5" height="13" fill="#8bd5ac" transform="rotate(8 114 308)"/><path d="M262.0,378.0 L345.0,372.0 L352.0,396.0 L300.0,410.0 L275.0,420.0Z" fill="#d5e8c4" opacity=".75"/><path d="M196.0,352.0 L212.0,346.0 L220.0,358.0 L205.0,368.0Z" fill="#cdebb0"/><path d="M387.0,298.0 L409.0,305.0 L409.0,335.0 L380.0,325.0Z" fill="#d5e8c4" opacity=".8"/><path d="M340.0,282.0 L347.0,284.0 L335.0,320.0 L328.0,318.0Z" fill="#cdebb0" opacity=".8"/><path d="M366.0,212.0 L372.0,214.0 L352.0,262.0 L346.0,260.0Z" fill="#cdebb0" opacity=".8"/><path d="M188.0,176.0 L197.0,174.0 L203.0,190.0 L199.0,200.0 L190.0,196.0Z" fill="#e67d99"/><path d="M182.0,232.0 L198.0,231.0 L197.0,253.0 L181.0,252.0Z" fill="#e67d99"/><path d="M101.0,438.0 L114.0,441.0 L115.0,448.0 L104.0,447.0Z" fill="#e67d99"/><path d="M104.0,449.0 L111.0,450.0 L104.0,474.0 L99.0,472.0Z" fill="#e67d99"/></g><path d="M409.0,469.4 L379.4,477.9 L358.3,480.7 L352.0,487.0 L340.0,487.5 L337.2,482.5 L327.3,492.0 L316.0,503.2 L302.0,522.0 L296.0,545.0 L287.0,565.0 L282.0,580.0 L276.0,600.0 L265.0,625.0 L258.0,640.0 L258.0,655.0 L251.3,664.3 L237.0,687.0 L226.0,719.0 L214.0,742.0 L203.5,752.0 L174.0,753.0 L138.0,784.0 L409.0,784.0Z" fill="url(#gb)"/><g clip-path="url(#cb)"><path d="M255.0,668.0 L409.0,700.0 L409.0,784.0 L200.0,784.0Z" fill="url(#gc)"/><path d="M251.3,664.3 L269.6,668.5 L264.0,695.3 L245.7,747.3 L217.6,747.3 L212.0,761.4 L203.5,784.0 L138.0,784.0 L174.0,753.0 L203.5,752.0 L214.0,742.0 L226.0,719.0 L237.0,687.0Z" fill="#ebdbe8"/><path d="M174.0,753.0 L203.5,752.0 L196.0,760.0 L160.0,784.0 L138.0,784.0Z" fill="#f1eeea"/><path d="M302.0,522.0 L312.0,524.0 L305.0,548.0 L296.0,570.0 L289.0,590.0 L281.0,612.0 L270.0,634.0 L262.0,648.0 L258.0,640.0 L265.0,625.0 L276.0,600.0 L282.0,580.0 L287.0,565.0 L296.0,545.0Z" fill="#cdebb0"/><path d="M409.0,469.4 L379.4,477.9 L358.3,480.7 L352.0,487.0 L340.0,487.5 L337.2,482.5 L327.3,492.0 L333.0,496.0 L345.0,492.0 L360.0,487.0 L385.0,484.0 L409.0,478.0Z" fill="#cdebb0"/><path d="M369.5,554.6 L390.6,554.6 L390.6,598.2 L369.5,598.2Z" fill="#cdebb0"/><rect x="375" y="568" width="5" height="18" fill="#8bd5ac"/><path d="M376.0,606.0 L385.0,606.0 L388.0,640.0 L381.0,655.0Z" fill="#cdebb0"/></g><path d="M217.6,655.9 L265.4,669.9 L262.6,678.4 L219.0,665.7Z" fill="#cdbfb3"/><path d="M209.1,679.8 L235.9,686.8 L234.5,695.3 L207.7,688.2Z" fill="#cdbfb3"/><path d="M196.5,698.0 L226.0,705.1 L223.2,716.4 L195.0,710.0Z" fill="#f1eeea"/><path d="M185.2,719.2 L213.3,728.0 L212.0,739.0 L184.0,731.0Z" fill="#cdbfb3"/><path d="M272.4,541.9 L296.4,547.5 L295.0,554.6 L271.0,550.3Z" fill="#f0e6e0"/><path d="M245.7,591.1 L273.8,595.4 L271.0,606.6 L244.3,603.8Z" fill="#cfe3ec"/><path d="M241.5,609.4 L264.0,613.6 L262.6,623.5 L240.0,620.7Z" fill="#f3efe9"/><path d="M228.8,634.7 L257.0,640.4 L255.6,653.0 L227.4,648.8Z" fill="#f3e4e0"/><path d="M259.8,630.5 L273.8,633.0 L272.0,648.8 L258.5,646.5Z" fill="#cdbfb3"/><path d="M245.7,458.0 L259.8,462.0 L257.0,472.0 L243.0,468.0Z" fill="#cdbfb3"/><path d="M-2.0,730.4 L5.1,719.2 L24.8,698.1 L41.7,671.3 L53.0,646.0 L78.3,643.2 L98.0,647.4 L116.3,657.3 L128.9,669.9 L133.2,684.0 L131.7,702.3 L123.3,714.9 L98.0,727.6 L78.3,734.6 L55.8,750.1 L34.7,764.2 L13.6,778.3 L-2.0,784.0Z" fill="#dcd6ce"/><path d="M68.0,655.0 L98.0,652.0 L118.0,664.0 L126.0,682.0 L124.0,700.0 L112.0,712.0 L92.0,718.0 L85.0,700.0 L75.0,680.0Z" fill="#cdebb0"/><path d="M0.0,735.0 L20.0,712.0 L45.0,700.0 L68.0,712.0 L80.0,732.0 L55.0,748.0 L30.0,764.0 L8.0,776.0 L0.0,778.0Z" fill="#cdebb0"/><path d="M98.0,650.0 L116.0,659.0 L127.0,672.0 L130.0,688.0 L128.0,701.0 L120.0,712.0 L112.0,712.0 L124.0,700.0 L126.0,682.0 L118.0,664.0Z" fill="#e6d9b8" opacity=".7"/><path d="M44.0,672.0 L56.0,650.0 L76.0,647.0 L70.0,656.0 L52.0,676.0Z" fill="#e8d8c0" opacity=".8"/><g fill="none" stroke="#f3f0ec" stroke-width="1.3"><path d="M10.0,722.0 L30.0,700.0 L46.0,675.0 L58.0,652.0 L96.0,652.0 L120.0,668.0 L127.0,686.0 L124.0,704.0 L110.0,716.0 L80.0,728.0 L56.0,744.0 L28.0,762.0 L6.0,776.0"/><path d="M46.0,675.0 L70.0,690.0 L96.0,694.0 L124.0,700.0"/><path d="M30.0,700.0 L60.0,716.0 L80.0,728.0"/><path d="M62.0,654.0 L66.0,690.0 L60.0,716.0"/><path d="M18.0,734.0 L44.0,742.0 L56.0,744.0"/><path d="M92.0,694.0 L100.0,722.0"/></g><g fill="#cfc4ba"><rect x="48" y="690" width="18" height="5" transform="rotate(30 57.0 692.5)"/><rect x="40" y="704" width="16" height="5" transform="rotate(30 48.0 706.5)"/><rect x="60" y="722" width="20" height="5" transform="rotate(-25 70.0 724.5)"/><rect x="52" y="734" width="18" height="5" transform="rotate(-25 61.0 736.5)"/><rect x="64" y="660" width="14" height="4" transform="rotate(0 71.0 662.0)"/><rect x="84" y="656" width="12" height="4" transform="rotate(15 90.0 658.0)"/><rect x="30" y="748" width="18" height="6" transform="rotate(-30 39.0 751.0)"/><rect x="14" y="760" width="16" height="6" transform="rotate(-30 22.0 763.0)"/></g><path d="M-2.0,730.4 L5.1,719.2 L24.8,698.1 L41.7,671.3 L53.0,646.0 L78.3,643.2 L98.0,647.4 L116.3,657.3 L128.9,669.9 L133.2,684.0 L131.7,702.3 L123.3,714.9 L98.0,727.6 L78.3,734.6 L55.8,750.1 L34.7,764.2 L13.6,778.3 L-2.0,784.0Z" fill="none" stroke="#c8c2ba" stroke-width="1"/><rect x="16" y="716" width="14" height="8" fill="#aee0c0" transform="rotate(-30 23 720)"/><path d="M-2.0,138.8 L145.8,167.6" fill="none" stroke="#e58aa0" stroke-width="8.6" stroke-dasharray="3 2"/><path d="M-2.0,138.8 L145.8,167.6" fill="none" stroke="#f0b4c2" stroke-width="7.2"/><path d="M96.0,500.0 L98.0,522.2 L106.4,564.4 L126.1,620.7 L140.2,669.9 L154.3,705.1 L175.4,747.3 L189.4,783.2" fill="none" stroke="#e58aa0" stroke-width="7.6" stroke-dasharray="3 2"/><path d="M96.0,500.0 L98.0,522.2 L106.4,564.4 L126.1,620.7 L140.2,669.9 L154.3,705.1 L175.4,747.3 L189.4,783.2" fill="none" stroke="#efb2c2" stroke-width="6.2"/><path d="M158.0,125.4 L240.0,128.5" fill="none" stroke="#d0c8c0" stroke-width="4.300000000000001" stroke-linejoin="round" stroke-linecap="butt"/><path d="M158.0,125.4 L240.0,128.5" fill="none" stroke="#ffffff" stroke-width="3.2" stroke-linejoin="round" stroke-linecap="round"/><path d="M285.0,280.0 L250.0,300.0" fill="none" stroke="#d0c8c0" stroke-width="4.300000000000001" stroke-linejoin="round" stroke-linecap="butt"/><path d="M285.0,280.0 L250.0,300.0" fill="none" stroke="#ffffff" stroke-width="3.2" stroke-linejoin="round" stroke-linecap="round"/><path d="M352.6,695.2 L330.0,761.4" fill="none" stroke="#d0c8c0" stroke-width="4.300000000000001" stroke-linejoin="round" stroke-linecap="butt"/><path d="M352.6,695.2 L330.0,761.4" fill="none" stroke="#ffffff" stroke-width="3.2" stroke-linejoin="round" stroke-linecap="round"/><path d="M268.0,712.0 L290.0,717.0" fill="none" stroke="#d0c8c0" stroke-width="4.300000000000001" stroke-linejoin="round" stroke-linecap="butt"/><path d="M268.0,712.0 L290.0,717.0" fill="none" stroke="#ffffff" stroke-width="3.2" stroke-linejoin="round" stroke-linecap="round"/><path d="M300.6,8.6 L275.3,59.3 L257.0,87.4 L240.0,131.0" fill="none" stroke="#c9cc8a" stroke-width="4.6" stroke-linejoin="round" stroke-linecap="butt"/><path d="M300.6,8.6 L275.3,59.3 L257.0,87.4 L240.0,131.0" fill="none" stroke="#f4f7bb" stroke-width="3.5" stroke-linejoin="round" stroke-linecap="round"/><path d="M352.6,0.2 L310.4,76.2" fill="none" stroke="#c9cc8a" stroke-width="4.6" stroke-linejoin="round" stroke-linecap="butt"/><path d="M352.6,0.2 L310.4,76.2" fill="none" stroke="#f4f7bb" stroke-width="3.5" stroke-linejoin="round" stroke-linecap="round"/><path d="M275.3,59.3 L351.2,101.5" fill="none" stroke="#c9cc8a" stroke-width="4.6" stroke-linejoin="round" stroke-linecap="butt"/><path d="M275.3,59.3 L351.2,101.5" fill="none" stroke="#f4f7bb" stroke-width="3.5" stroke-linejoin="round" stroke-linecap="round"/><path d="M265.4,0.0 L237.3,57.9 L212.0,119.8 L210.5,131.0" fill="none" stroke="#c9cc8a" stroke-width="4.6" stroke-linejoin="round" stroke-linecap="butt"/><path d="M265.4,0.0 L237.3,57.9 L212.0,119.8 L210.5,131.0" fill="none" stroke="#f4f7bb" stroke-width="3.5" stroke-linejoin="round" stroke-linecap="round"/><path d="M252.7,0.0 L273.8,50.8" fill="none" stroke="#c9cc8a" stroke-width="4.6" stroke-linejoin="round" stroke-linecap="butt"/><path d="M252.7,0.0 L273.8,50.8" fill="none" stroke="#f4f7bb" stroke-width="3.5" stroke-linejoin="round" stroke-linecap="round"/><path d="M212.0,-1.0 L203.5,20.0 L200.0,60.0 L200.0,119.0 L196.0,160.0 L188.0,200.0 L179.0,261.0 L174.0,290.0 L168.3,320.0" fill="none" stroke="#c9cc8a" stroke-width="4.6" stroke-linejoin="round" stroke-linecap="butt"/><path d="M212.0,-1.0 L203.5,20.0 L200.0,60.0 L200.0,119.0 L196.0,160.0 L188.0,200.0 L179.0,261.0 L174.0,290.0 L168.3,320.0" fill="none" stroke="#f4f7bb" stroke-width="3.5" stroke-linejoin="round" stroke-linecap="round"/><path d="M158.0,117.0 L203.5,119.8 L212.0,119.8" fill="none" stroke="#c9cc8a" stroke-width="4.6" stroke-linejoin="round" stroke-linecap="butt"/><path d="M158.0,117.0 L203.5,119.8 L212.0,119.8" fill="none" stroke="#f4f7bb" stroke-width="3.5" stroke-linejoin="round" stroke-linecap="round"/><path d="M304.8,177.5 L293.5,194.3 L259.8,245.0 L251.3,261.2 L226.0,299.0 L203.5,330.0 L192.0,346.0" fill="none" stroke="#c9cc8a" stroke-width="4.6" stroke-linejoin="round" stroke-linecap="butt"/><path d="M304.8,177.5 L293.5,194.3 L259.8,245.0 L251.3,261.2 L226.0,299.0 L203.5,330.0 L192.0,346.0" fill="none" stroke="#f4f7bb" stroke-width="3.5" stroke-linejoin="round" stroke-linecap="round"/><path d="M320.3,184.5 L302.0,219.7 L300.6,231.0 L290.7,261.0 L276.0,283.0" fill="none" stroke="#c9cc8a" stroke-width="4.6" stroke-linejoin="round" stroke-linecap="butt"/><path d="M320.3,184.5 L302.0,219.7 L300.6,231.0 L290.7,261.0 L276.0,283.0" fill="none" stroke="#f4f7bb" stroke-width="3.5" stroke-linejoin="round" stroke-linecap="round"/><path d="M227.4,223.9 L259.8,245.0 L276.7,261.0 L300.0,270.0" fill="none" stroke="#c9cc8a" stroke-width="4.6" stroke-linejoin="round" stroke-linecap="butt"/><path d="M227.4,223.9 L259.8,245.0 L276.7,261.0 L300.0,270.0" fill="none" stroke="#f4f7bb" stroke-width="3.5" stroke-linejoin="round" stroke-linecap="round"/><path d="M369.5,208.4 L349.8,261.0" fill="none" stroke="#c9cc8a" stroke-width="4.6" stroke-linejoin="round" stroke-linecap="butt"/><path d="M369.5,208.4 L349.8,261.0" fill="none" stroke="#f4f7bb" stroke-width="3.5" stroke-linejoin="round" stroke-linecap="round"/><path d="M196.5,261.0 L180.0,300.0 L168.3,320.0 L160.0,368.0 L147.2,392.0 L123.3,441.3 L114.9,458.2 L110.6,477.9" fill="none" stroke="#c9cc8a" stroke-width="4.6" stroke-linejoin="round" stroke-linecap="butt"/><path d="M196.5,261.0 L180.0,300.0 L168.3,320.0 L160.0,368.0 L147.2,392.0 L123.3,441.3 L114.9,458.2 L110.6,477.9" fill="none" stroke="#f4f7bb" stroke-width="3.5" stroke-linejoin="round" stroke-linecap="round"/><path d="M221.0,381.0 L203.5,359.7 L179.6,382.2 L164.1,394.9 L143.0,431.4 L119.0,469.4 L114.9,479.3" fill="none" stroke="#c9cc8a" stroke-width="4.6" stroke-linejoin="round" stroke-linecap="butt"/><path d="M221.0,381.0 L203.5,359.7 L179.6,382.2 L164.1,394.9 L143.0,431.4 L119.0,469.4 L114.9,479.3" fill="none" stroke="#f4f7bb" stroke-width="3.5" stroke-linejoin="round" stroke-linecap="round"/><path d="M131.7,299.2 L182.4,328.7 L203.5,340.0 L222.0,350.0" fill="none" stroke="#c9cc8a" stroke-width="4.6" stroke-linejoin="round" stroke-linecap="butt"/><path d="M131.7,299.2 L182.4,328.7 L203.5,340.0 L222.0,350.0" fill="none" stroke="#f4f7bb" stroke-width="3.5" stroke-linejoin="round" stroke-linecap="round"/><path d="M126.0,325.9 L168.3,351.2 L190.0,362.0" fill="none" stroke="#c9cc8a" stroke-width="4.6" stroke-linejoin="round" stroke-linecap="butt"/><path d="M126.0,325.9 L168.3,351.2 L190.0,362.0" fill="none" stroke="#f4f7bb" stroke-width="3.5" stroke-linejoin="round" stroke-linecap="round"/><path d="M123.3,337.2 L175.4,376.6" fill="none" stroke="#c9cc8a" stroke-width="4.6" stroke-linejoin="round" stroke-linecap="butt"/><path d="M123.3,337.2 L175.4,376.6" fill="none" stroke="#f4f7bb" stroke-width="3.5" stroke-linejoin="round" stroke-linecap="round"/><path d="M299.0,342.0 L407.5,343.5" fill="none" stroke="#c9cc8a" stroke-width="4.6" stroke-linejoin="round" stroke-linecap="butt"/><path d="M299.0,342.0 L407.5,343.5" fill="none" stroke="#f4f7bb" stroke-width="3.5" stroke-linejoin="round" stroke-linecap="round"/><path d="M271.0,371.0 L358.0,371.0" fill="none" stroke="#c9cc8a" stroke-width="4.6" stroke-linejoin="round" stroke-linecap="butt"/><path d="M271.0,371.0 L358.0,371.0" fill="none" stroke="#f4f7bb" stroke-width="3.5" stroke-linejoin="round" stroke-linecap="round"/><path d="M288.0,262.0 L320.0,272.0 L360.0,290.0 L407.5,300.0" fill="none" stroke="#c9cc8a" stroke-width="4.6" stroke-linejoin="round" stroke-linecap="butt"/><path d="M288.0,262.0 L320.0,272.0 L360.0,290.0 L407.5,300.0" fill="none" stroke="#f4f7bb" stroke-width="3.5" stroke-linejoin="round" stroke-linecap="round"/><path d="M262.0,290.0 L300.0,303.0" fill="none" stroke="#c9cc8a" stroke-width="4.6" stroke-linejoin="round" stroke-linecap="butt"/><path d="M262.0,290.0 L300.0,303.0" fill="none" stroke="#f4f7bb" stroke-width="3.5" stroke-linejoin="round" stroke-linecap="round"/><path d="M326.0,262.0 L316.0,300.0" fill="none" stroke="#c9cc8a" stroke-width="4.6" stroke-linejoin="round" stroke-linecap="butt"/><path d="M326.0,262.0 L316.0,300.0" fill="none" stroke="#f4f7bb" stroke-width="3.5" stroke-linejoin="round" stroke-linecap="round"/><path d="M390.0,262.0 L375.0,330.0 L407.5,340.0" fill="none" stroke="#c9cc8a" stroke-width="4.6" stroke-linejoin="round" stroke-linecap="butt"/><path d="M390.0,262.0 L375.0,330.0 L407.5,340.0" fill="none" stroke="#f4f7bb" stroke-width="3.5" stroke-linejoin="round" stroke-linecap="round"/><path d="M321.0,522.0 L316.0,531.0" fill="none" stroke="#c9cc8a" stroke-width="4.6" stroke-linejoin="round" stroke-linecap="butt"/><path d="M321.0,522.0 L316.0,531.0" fill="none" stroke="#f4f7bb" stroke-width="3.5" stroke-linejoin="round" stroke-linecap="round"/><path d="M271.0,648.8 L273.8,674.1 L265.4,696.7 L257.0,719.2 L245.7,747.3 L242.9,752.9 L220.4,750.1 L212.0,761.4 L206.3,783.2" fill="none" stroke="#c9cc8a" stroke-width="4.6" stroke-linejoin="round" stroke-linecap="butt"/><path d="M271.0,648.8 L273.8,674.1 L265.4,696.7 L257.0,719.2 L245.7,747.3 L242.9,752.9 L220.4,750.1 L212.0,761.4 L206.3,783.2" fill="none" stroke="#f4f7bb" stroke-width="3.5" stroke-linejoin="round" stroke-linecap="round"/><path d="M368.1,603.8 L376.5,639.0 L362.5,677.0 L352.6,695.2" fill="none" stroke="#c9cc8a" stroke-width="4.6" stroke-linejoin="round" stroke-linecap="butt"/><path d="M368.1,603.8 L376.5,639.0 L362.5,677.0 L352.6,695.2" fill="none" stroke="#f4f7bb" stroke-width="3.5" stroke-linejoin="round" stroke-linecap="round"/><path d="M407.5,690.0 L395.0,700.0 L385.0,725.0" fill="none" stroke="#c9cc8a" stroke-width="4.6" stroke-linejoin="round" stroke-linecap="butt"/><path d="M407.5,690.0 L395.0,700.0 L385.0,725.0" fill="none" stroke="#f4f7bb" stroke-width="3.5" stroke-linejoin="round" stroke-linecap="round"/><path d="M237.3,133.9 L304.8,174.7 L351.2,194.3 L407.5,212.6" fill="none" stroke="#d7ab72" stroke-width="5.6" stroke-linejoin="round" stroke-linecap="butt"/><path d="M237.3,133.9 L304.8,174.7 L351.2,194.3 L407.5,212.6" fill="none" stroke="#fcd6a4" stroke-width="4.5" stroke-linejoin="round" stroke-linecap="round"/><path d="M399.0,-1.0 L372.3,39.6 L366.7,79.0 L351.2,104.3 L304.8,174.7" fill="none" stroke="#d7ab72" stroke-width="5.6" stroke-linejoin="round" stroke-linecap="butt"/><path d="M399.0,-1.0 L372.3,39.6 L366.7,79.0 L351.2,104.3 L304.8,174.7" fill="none" stroke="#fcd6a4" stroke-width="4.5" stroke-linejoin="round" stroke-linecap="round"/><path d="M365.3,112.7 L327.3,170.4 L320.3,183.1" fill="none" stroke="#d7ab72" stroke-width="5.6" stroke-linejoin="round" stroke-linecap="butt"/><path d="M365.3,112.7 L327.3,170.4 L320.3,183.1" fill="none" stroke="#fcd6a4" stroke-width="4.5" stroke-linejoin="round" stroke-linecap="round"/><path d="M407.5,70.5 L372.3,140.9 L352.6,194.3 L344.2,225.3 L338.6,261.0 L330.0,285.0 L312.0,309.0" fill="none" stroke="#d7ab72" stroke-width="5.6" stroke-linejoin="round" stroke-linecap="butt"/><path d="M407.5,70.5 L372.3,140.9 L352.6,194.3 L344.2,225.3 L338.6,261.0 L330.0,285.0 L312.0,309.0" fill="none" stroke="#fcd6a4" stroke-width="4.5" stroke-linejoin="round" stroke-linecap="round"/><path d="M310.4,317.5 L288.0,348.4 L259.8,393.4 L231.6,434.2 L203.5,458.2 L168.3,493.3 L130.3,514.4 L119.0,511.6 L110.6,500.4 L112.0,480.7 L83.0,477.0" fill="none" stroke="#d7ab72" stroke-width="5.6" stroke-linejoin="round" stroke-linecap="butt"/><path d="M310.4,317.5 L288.0,348.4 L259.8,393.4 L231.6,434.2 L203.5,458.2 L168.3,493.3 L130.3,514.4 L119.0,511.6 L110.6,500.4 L112.0,480.7 L83.0,477.0" fill="none" stroke="#fcd6a4" stroke-width="4.5" stroke-linejoin="round" stroke-linecap="round"/><path d="M210.5,131.0 L206.3,197.2 L212.0,231.0" fill="none" stroke="#d7ab72" stroke-width="5.6" stroke-linejoin="round" stroke-linecap="butt"/><path d="M210.5,131.0 L206.3,197.2 L212.0,231.0" fill="none" stroke="#fcd6a4" stroke-width="4.5" stroke-linejoin="round" stroke-linecap="round"/><path d="M237.3,133.9 L226.0,176.0 L217.6,205.6 L209.1,253.4 L205.0,261.0" fill="none" stroke="#d7ab72" stroke-width="5.6" stroke-linejoin="round" stroke-linecap="butt"/><path d="M237.3,133.9 L226.0,176.0 L217.6,205.6 L209.1,253.4 L205.0,261.0" fill="none" stroke="#fcd6a4" stroke-width="4.5" stroke-linejoin="round" stroke-linecap="round"/><path d="M203.5,200.0 L226.0,207.0 L271.0,232.3 L293.5,239.4 L338.6,253.4 L358.3,261.0 L407.5,275.0" fill="none" stroke="#d7ab72" stroke-width="5.6" stroke-linejoin="round" stroke-linecap="butt"/><path d="M203.5,200.0 L226.0,207.0 L271.0,232.3 L293.5,239.4 L338.6,253.4 L358.3,261.0 L407.5,275.0" fill="none" stroke="#fcd6a4" stroke-width="4.5" stroke-linejoin="round" stroke-linecap="round"/><path d="M407.5,205.0 L392.0,216.9 L379.0,261.0 L369.5,289.3 L349.8,331.5 L352.6,359.7 L358.3,401.9" fill="none" stroke="#d7ab72" stroke-width="5.6" stroke-linejoin="round" stroke-linecap="butt"/><path d="M407.5,205.0 L392.0,216.9 L379.0,261.0 L369.5,289.3 L349.8,331.5 L352.6,359.7 L358.3,401.9" fill="none" stroke="#fcd6a4" stroke-width="4.5" stroke-linejoin="round" stroke-linecap="round"/><path d="M407.5,140.9 L370.9,201.4" fill="none" stroke="#d7ab72" stroke-width="5.6" stroke-linejoin="round" stroke-linecap="butt"/><path d="M407.5,140.9 L370.9,201.4" fill="none" stroke="#fcd6a4" stroke-width="4.5" stroke-linejoin="round" stroke-linecap="round"/><path d="M141.0,221.0 L180.0,224.0 L203.5,222.0" fill="none" stroke="#d7ab72" stroke-width="5.6" stroke-linejoin="round" stroke-linecap="butt"/><path d="M141.0,221.0 L180.0,224.0 L203.5,222.0" fill="none" stroke="#fcd6a4" stroke-width="4.5" stroke-linejoin="round" stroke-linecap="round"/><path d="M372.0,0.0 L385.0,30.0 L407.5,50.0" fill="none" stroke="#d7ab72" stroke-width="5.6" stroke-linejoin="round" stroke-linecap="butt"/><path d="M372.0,0.0 L385.0,30.0 L407.5,50.0" fill="none" stroke="#fcd6a4" stroke-width="4.5" stroke-linejoin="round" stroke-linecap="round"/><path d="M283.7,671.3 L302.0,675.6 L352.6,695.2 L372.3,703.7 L407.5,719.2" fill="none" stroke="#d7ab72" stroke-width="5.6" stroke-linejoin="round" stroke-linecap="butt"/><path d="M283.7,671.3 L302.0,675.6 L352.6,695.2 L372.3,703.7 L407.5,719.2" fill="none" stroke="#fcd6a4" stroke-width="4.5" stroke-linejoin="round" stroke-linecap="round"/><path d="M390.6,603.8 L394.8,634.7 L386.4,677.0 L372.3,703.7" fill="none" stroke="#d7ab72" stroke-width="5.6" stroke-linejoin="round" stroke-linecap="butt"/><path d="M390.6,603.8 L394.8,634.7 L386.4,677.0 L372.3,703.7" fill="none" stroke="#fcd6a4" stroke-width="4.5" stroke-linejoin="round" stroke-linecap="round"/><path d="M362.5,526.4 L372.3,539.1 L363.9,558.8 L365.3,592.5 L368.1,601.0 L407.5,602.4" fill="none" stroke="#d7ab72" stroke-width="5.6" stroke-linejoin="round" stroke-linecap="butt"/><path d="M362.5,526.4 L372.3,539.1 L363.9,558.8 L365.3,592.5 L368.1,601.0 L407.5,602.4" fill="none" stroke="#fcd6a4" stroke-width="4.5" stroke-linejoin="round" stroke-linecap="round"/><path d="M160.0,-2.0 L159.7,30.0 L158.5,60.0 L156.7,98.7 L152.5,140.0 L148.6,169.0 L143.7,211.0 L135.6,261.0 L124.7,317.5 L112.0,373.7 L100.0,430.0 L98.0,436.0" fill="none" stroke="#d98c78" stroke-width="8.3" stroke-linejoin="round" stroke-linecap="butt"/><path d="M160.0,-2.0 L159.7,30.0 L158.5,60.0 L156.7,98.7 L152.5,140.0 L148.6,169.0 L143.7,211.0 L135.6,261.0 L124.7,317.5 L112.0,373.7 L100.0,430.0 L98.0,436.0" fill="none" stroke="#f9b29c" stroke-width="7.2" stroke-linejoin="round" stroke-linecap="round"/><path d="M149.0,169.0 L203.5,222.0 L212.0,231.0 L248.5,261.0 L271.0,283.7 L310.4,309.0" fill="none" stroke="#d98c78" stroke-width="7.6" stroke-linejoin="round" stroke-linecap="butt"/><path d="M149.0,169.0 L203.5,222.0 L212.0,231.0 L248.5,261.0 L271.0,283.7 L310.4,309.0" fill="none" stroke="#f9b29c" stroke-width="6.5" stroke-linejoin="round" stroke-linecap="round"/><path d="M372.0,537.0 L379.4,547.5 L394.8,558.8 L397.6,601.0 L407.5,602.4" fill="none" stroke="#d98c78" stroke-width="7.1" stroke-linejoin="round" stroke-linecap="butt"/><path d="M372.0,537.0 L379.4,547.5 L394.8,558.8 L397.6,601.0 L407.5,602.4" fill="none" stroke="#f9b29c" stroke-width="6" stroke-linejoin="round" stroke-linecap="round"/><path d="M310.4,309.0 L327.3,328.7 L407.5,522.2" fill="none" stroke="#8a4a3c" stroke-width="8.1" stroke-linejoin="round" stroke-linecap="butt"/><path d="M310.4,309.0 L327.3,328.7 L407.5,522.2" fill="none" stroke="#f9b29c" stroke-width="7" stroke-linejoin="round" stroke-linecap="round"/><path d="M320.0,312.0 L334.0,328.0 L409.0,508.0" fill="none" stroke="#f9b29c" stroke-width="3" stroke-linejoin="round" stroke-linecap="round"/><path d="M221.8,380.8 L358.3,522.2 L372.0,537.0" fill="none" stroke="#6e3a30" stroke-width="7.1" stroke-linejoin="round" stroke-linecap="butt"/><path d="M221.8,380.8 L358.3,522.2 L372.0,537.0" fill="none" stroke="#f9b29c" stroke-width="6" stroke-linejoin="round" stroke-linecap="round"/><path d="M221.8,380.8 L358.3,522.2 L372.0,537.0" fill="none" stroke="#fbe3da" stroke-width="1.2"/><path d="M221.8,380.8 c-6,-8 -2,-12 4,-6 M226,377 c8,-8 14,-4 6,6" fill="none" stroke="#b8645a" stroke-width="2.6"/><path d="M221.8,380.8 c-6,-8 -2,-12 4,-6 M226,377 c8,-8 14,-4 6,6" fill="none" stroke="#f9b29c" stroke-width="1.4"/><path d="M98.0,436.0 L92.0,455.0 L86.7,472.2 L85.3,480.7" fill="none" stroke="#cf6a84" stroke-width="7.1" stroke-linejoin="round" stroke-linecap="butt"/><path d="M98.0,436.0 L92.0,455.0 L86.7,472.2 L85.3,480.7" fill="none" stroke="#e892a2" stroke-width="6" stroke-linejoin="round" stroke-linecap="round"/><path d="M103.0,438.0 L112.0,448.0 L104.0,474.0" fill="none" stroke="#e67d99" stroke-width="4" stroke-linejoin="round" stroke-linecap="round"/><path d="M85.3,480.7 L91.0,500.0 L98.0,522.0 L110.0,530.0 L126.0,523.0" fill="none" stroke="#efb2c2" stroke-width="6" stroke-linejoin="round" stroke-linecap="round"/><path d="M126.0,523.0 L154.3,520.0 L182.4,506.0 L203.5,488.5 L231.6,458.2 L257.0,442.7 L271.0,432.8 L282.3,423.0 L302.0,414.6 L330.0,409.0 L372.3,403.3 L407.5,399.0" fill="none" stroke="#cf6a84" stroke-width="7.6" stroke-linejoin="round" stroke-linecap="butt"/><path d="M126.0,523.0 L154.3,520.0 L182.4,506.0 L203.5,488.5 L231.6,458.2 L257.0,442.7 L271.0,432.8 L282.3,423.0 L302.0,414.6 L330.0,409.0 L372.3,403.3 L407.5,399.0" fill="none" stroke="#e892a2" stroke-width="6.5" stroke-linejoin="round" stroke-linecap="round"/><path d="M407.5,525.0 L372.3,522.2 L344.2,526.4 L324.5,536.3 L310.4,553.2 L299.2,585.5 L287.9,613.6 L276.7,634.7 L273.8,655.9 L279.5,674.1 L285.1,688.2 L282.3,705.1 L273.8,726.2 L265.4,752.9 L260.0,784.0" fill="none" stroke="#cf6a84" stroke-width="7.6" stroke-linejoin="round" stroke-linecap="butt"/><path d="M407.5,525.0 L372.3,522.2 L344.2,526.4 L324.5,536.3 L310.4,553.2 L299.2,585.5 L287.9,613.6 L276.7,634.7 L273.8,655.9 L279.5,674.1 L285.1,688.2 L282.3,705.1 L273.8,726.2 L265.4,752.9 L260.0,784.0" fill="none" stroke="#e892a2" stroke-width="6.5" stroke-linejoin="round" stroke-linecap="round"/><g fill="#5d6ea6"><rect x="236.5" y="55.7" width="4.4" height="4.4"/><rect x="271.6" y="48.6" width="4.4" height="4.4"/><rect x="280.8" y="47.2" width="4.4" height="4.4"/><rect x="256.8" y="83.8" width="4.4" height="4.4"/><rect x="209.8" y="128.1" width="4.4" height="4.4"/><rect x="223.8" y="173.2" width="4.4" height="4.4"/><rect x="309.6" y="176.7" width="4.4" height="4.4"/><rect x="325.8" y="167.5" width="4.4" height="4.4"/><rect x="292.8" y="190.8" width="4.4" height="4.4"/><rect x="298.4" y="220.3" width="4.4" height="4.4"/><rect x="209.8" y="226.6" width="4.4" height="4.4"/><rect x="337.1" y="250.5" width="4.4" height="4.4"/><rect x="378.6" y="204.1" width="4.4" height="4.4"/><rect x="349.0" y="102.8" width="4.4" height="4.4"/><rect x="363.1" y="110.5" width="4.4" height="4.4"/><rect x="377.8" y="38.8" width="4.4" height="4.4"/><rect x="370.1" y="24.8" width="4.4" height="4.4"/><rect x="301.2" y="3.6" width="4.4" height="4.4"/><rect x="166.1" y="318.8" width="4.4" height="4.4"/><rect x="180.2" y="327.2" width="4.4" height="4.4"/><rect x="157.7" y="367.3" width="4.4" height="4.4"/><rect x="130.3" y="371.5" width="4.4" height="4.4"/><rect x="133.8" y="378.6" width="4.4" height="4.4"/><rect x="146.4" y="389.8" width="4.4" height="4.4"/><rect x="161.9" y="393.4" width="4.4" height="4.4"/><rect x="183.0" y="396.2" width="4.4" height="4.4"/><rect x="195.7" y="407.4" width="4.4" height="4.4"/><rect x="141.5" y="429.9" width="4.4" height="4.4"/><rect x="121.1" y="439.8" width="4.4" height="4.4"/><rect x="146.4" y="450.3" width="4.4" height="4.4"/><rect x="166.8" y="446.1" width="4.4" height="4.4"/><rect x="112.0" y="478.5" width="4.4" height="4.4"/><rect x="124.6" y="498.8" width="4.4" height="4.4"/><rect x="191.4" y="265.3" width="4.4" height="4.4"/><rect x="249.1" y="260.4" width="4.4" height="4.4"/><rect x="262.5" y="275.2" width="4.4" height="4.4"/><rect x="269.5" y="280.8" width="4.4" height="4.4"/><rect x="336.4" y="280.1" width="4.4" height="4.4"/><rect x="397.6" y="276.6" width="4.4" height="4.4"/><rect x="375.8" y="344.8" width="4.4" height="4.4"/><rect x="225.9" y="356.1" width="4.4" height="4.4"/><rect x="211.1" y="364.5" width="4.4" height="4.4"/><rect x="361.7" y="553.8" width="4.4" height="4.4"/><rect x="344.8" y="581.2" width="4.4" height="4.4"/><rect x="358.2" y="629.8" width="4.4" height="4.4"/><rect x="380.0" y="645.9" width="4.4" height="4.4"/><rect x="376.5" y="654.4" width="4.4" height="4.4"/><rect x="368.7" y="745.1" width="4.4" height="4.4"/></g><text x="61.4" y="116.0" font-size="9.5" fill="#6a7fd6" text-anchor="middle" font-weight="normal"  transform="rotate(-79.3 61.4 116.0)" textLength="196" lengthAdjust="spacingAndGlyphs" style="">Battery Maritime Building - West 39th Street</text><text x="87.0" y="60.0" font-size="9.5" fill="#6a7fd6" text-anchor="middle" font-weight="normal"  transform="rotate(-79 87.0 60.0)" textLength="118" lengthAdjust="spacingAndGlyphs" style="">Hoboken 14th Street - Bro</text><text x="22.0" y="213.0" font-size="11" fill="#7b97b6" text-anchor="middle" font-weight="normal"  transform="rotate(-77 22.0 213.0)" textLength="68" lengthAdjust="spacingAndGlyphs" style="font-style:italic">Hudson River</text><text x="14.0" y="296.0" font-size="9.5" fill="#6a7fd6" text-anchor="middle" font-weight="normal"  transform="rotate(-80 14.0 296.0)" textLength="58" lengthAdjust="spacingAndGlyphs" style="">/ Wall Street</text><text x="55.0" y="440.0" font-size="9.5" fill="#6a7fd6" text-anchor="middle" font-weight="normal"  transform="rotate(84 55.0 440.0)" textLength="150" lengthAdjust="spacingAndGlyphs" style="">Brookfield Place - Pier 11 / Wall Street</text><text x="34.0" y="462.0" font-size="9.5" fill="#6a7fd6" text-anchor="middle" font-weight="normal"  transform="rotate(78 34.0 462.0)" textLength="112" lengthAdjust="spacingAndGlyphs" style="">Battery Maritime Building</text><text x="60.0" y="573.0" font-size="10.5" fill="#6a7fd6" text-anchor="middle" font-weight="normal"  transform="rotate(29.7 60.0 573.0)" textLength="86" lengthAdjust="spacingAndGlyphs" style="">Pier 11 / Wall Street</text><text x="81.0" y="549.0" font-size="10" fill="#6a7fd6" text-anchor="middle" font-weight="normal"  transform="rotate(38 81.0 549.0)" textLength="68" lengthAdjust="spacingAndGlyphs" style="">Brookfield Place</text><text x="8.0" y="536.0" font-size="10" fill="#6a7fd6" text-anchor="middle" font-weight="normal"  transform="rotate(58 8.0 536.0)" textLength="26" lengthAdjust="spacingAndGlyphs" style="">Hook -</text><text x="205.0" y="640.0" font-size="9" fill="#6a7fd6" text-anchor="middle" font-weight="normal"  transform="rotate(-78 205.0 640.0)" textLength="150" lengthAdjust="spacingAndGlyphs" style="">Governors Island (summer weekends)</text><text x="214.0" y="700.0" font-size="9.5" fill="#6a7fd6" text-anchor="middle" font-weight="normal"  transform="rotate(-62 214.0 700.0)" textLength="66" lengthAdjust="spacingAndGlyphs" style="">Atlantic Avenue</text><text x="170.0" y="732.0" font-size="9.5" fill="#6a7fd6" text-anchor="middle" font-weight="normal"  transform="rotate(-52 170.0 732.0)" textLength="40" lengthAdjust="spacingAndGlyphs" style="">Red Hook</text><text x="146.0" y="728.0" font-size="9.5" fill="#6a7fd6" text-anchor="middle" font-weight="normal"  transform="rotate(-42 146.0 728.0)" textLength="30" lengthAdjust="spacingAndGlyphs" style="">Pier 11</text><text x="340.0" y="421.0" font-size="9.5" fill="#6a7fd6" text-anchor="middle" font-weight="normal"  transform="rotate(-12 340.0 421.0)" textLength="100" lengthAdjust="spacingAndGlyphs" style="">Pier 11 - Corlears Hook</text><text x="382.0" y="429.0" font-size="9.5" fill="#6a7fd6" text-anchor="middle" font-weight="normal"  transform="rotate(-5 382.0 429.0)" textLength="52" lengthAdjust="spacingAndGlyphs" style="">Pier 11 - Bro</text><text x="241.0" y="488.0" font-size="9.5" fill="#6a7fd6" text-anchor="middle" font-weight="normal"  transform="rotate(-40 241.0 488.0)" textLength="28" lengthAdjust="spacingAndGlyphs" style="">Street</text><text x="290.0" y="500.0" font-size="9.5" fill="#b08cb8" text-anchor="middle" font-weight="normal"  transform="rotate(-55 290.0 500.0)" textLength="72" lengthAdjust="spacingAndGlyphs" style="">New York County</text><text x="116.0" y="164.5" font-size="9.5" fill="#3a2a2e" text-anchor="middle" font-weight="normal"  transform="rotate(11 116.0 164.5)" textLength="59" lengthAdjust="spacingAndGlyphs" style="">Holland Tunnel</text><text x="161.5" y="49.0" font-size="9.5" fill="#4a3028" text-anchor="middle" font-weight="normal"  transform="rotate(-86 161.5 49.0)" textLength="44" lengthAdjust="spacingAndGlyphs" style="">West Street</text><text x="130.5" y="647.0" font-size="9" fill="#2e2226" text-anchor="middle" font-weight="normal"  transform="rotate(71.8 130.5 647.0)" textLength="95" lengthAdjust="spacingAndGlyphs" style="">Brooklyn-Battery Tunnel</text><text x="338.5" y="134.0" font-size="9.5" fill="#5e5030" text-anchor="middle" font-weight="normal"  transform="rotate(-54 338.5 134.0)" textLength="38" lengthAdjust="spacingAndGlyphs" style="">Broadway</text><text x="240.0" y="285.0" font-size="9.5" fill="#5e5030" text-anchor="middle" font-weight="normal"  transform="rotate(-54 240.0 285.0)" textLength="38" lengthAdjust="spacingAndGlyphs" style="">Broadway</text><text x="350.0" y="9.0" font-size="9.5" fill="#6a6a30" text-anchor="middle" font-weight="normal"  transform="rotate(-60 350.0 9.0)" textLength="18" lengthAdjust="spacingAndGlyphs" style="">5th A</text><text x="104.0" y="510.0" font-size="9" fill="#3a1c24" text-anchor="middle" font-weight="normal"  transform="rotate(62 104.0 510.0)" textLength="38" lengthAdjust="spacingAndGlyphs" style="">FDR Drive</text><text x="200.0" y="498.0" font-size="9" fill="#3a1c24" text-anchor="middle" font-weight="normal"  transform="rotate(-40 200.0 498.0)" textLength="38" lengthAdjust="spacingAndGlyphs" style="">FDR Drive</text><text x="392.0" y="404.0" font-size="9" fill="#3a1c24" text-anchor="middle" font-weight="normal"  transform="rotate(-5 392.0 404.0)" textLength="30" lengthAdjust="spacingAndGlyphs" style="">FDR Dri</text><text x="323.8" y="688.5" font-size="9.5" fill="#4a3a1c" text-anchor="middle" font-weight="normal"  transform="rotate(20.7 323.8 688.5)" textLength="62" lengthAdjust="spacingAndGlyphs" style="">Atlantic Avenue</text><text x="299.0" y="590.0" font-size="9.5" fill="#4a4a40" text-anchor="middle" font-weight="normal"  transform="rotate(-68.7 299.0 590.0)" textLength="54" lengthAdjust="spacingAndGlyphs" style="">Furman Street</text><text x="210.3" y="354.0" font-size="11.5" fill="#3a3a3a" text-anchor="middle" font-weight="normal" stroke="#ffffff" stroke-width="1.6" paint-order="stroke" stroke-linejoin="round"  textLength="84.6" lengthAdjust="spacingAndGlyphs" style="">Lower Manhattan</text><text x="302.7" y="454.0" font-size="10.5" fill="#555" text-anchor="middle" font-weight="normal" stroke="#ffffff" stroke-width="1.6" paint-order="stroke" stroke-linejoin="round"  textLength="42" lengthAdjust="spacingAndGlyphs" style="">Brooklyn</text><text x="302.7" y="467.0" font-size="10.5" fill="#555" text-anchor="middle" font-weight="normal" stroke="#ffffff" stroke-width="1.6" paint-order="stroke" stroke-linejoin="round"  textLength="32" lengthAdjust="spacingAndGlyphs" style="">Bridge</text><text x="375.0" y="443.5" font-size="12.5" fill="#333" text-anchor="middle" font-weight="normal" stroke="#ffffff" stroke-width="1.6" paint-order="stroke" stroke-linejoin="round"  textLength="56" lengthAdjust="spacingAndGlyphs" style="">Manhattan</text><text x="375.0" y="457.0" font-size="12.5" fill="#333" text-anchor="middle" font-weight="normal" stroke="#ffffff" stroke-width="1.6" paint-order="stroke" stroke-linejoin="round"  textLength="35" lengthAdjust="spacingAndGlyphs" style="">Bridge</text><text x="60.7" y="684.0" font-size="10" fill="#555" text-anchor="middle" font-weight="normal" stroke="#ffffff" stroke-width="1.6" paint-order="stroke" stroke-linejoin="round"  textLength="59" lengthAdjust="spacingAndGlyphs" style="">Colonels Row</text><text x="55.0" y="705.0" font-size="10" fill="#555" text-anchor="middle" font-weight="normal" stroke="#ffffff" stroke-width="1.6" paint-order="stroke" stroke-linejoin="round"  textLength="66" lengthAdjust="spacingAndGlyphs" style="">Liggett Terrace</text><text x="99.0" y="729.7" font-size="10" fill="#555" text-anchor="middle" font-weight="normal" stroke="#ffffff" stroke-width="1.6" paint-order="stroke" stroke-linejoin="round"  textLength="59.8" lengthAdjust="spacingAndGlyphs" style="">South Battery</text><text x="17.0" y="763.5" font-size="10" fill="#666" text-anchor="middle" font-weight="normal" stroke="#ffffff" stroke-width="1.6" paint-order="stroke" stroke-linejoin="round"  textLength="35" lengthAdjust="spacingAndGlyphs" style="">Slide Hill</text><text x="18.0" y="776.0" font-size="9.5" fill="#666" text-anchor="middle" font-weight="normal" stroke="#ffffff" stroke-width="1.6" paint-order="stroke" stroke-linejoin="round"  textLength="22" lengthAdjust="spacingAndGlyphs" style="">12 m</text><text x="112.7" y="750.0" font-size="11" fill="#8aa2bd" text-anchor="middle" font-weight="normal"  textLength="52" lengthAdjust="spacingAndGlyphs" style="font-style:italic">Buttermilk</text><text x="112.0" y="763.6" font-size="11" fill="#8aa2bd" text-anchor="middle" font-weight="normal"  textLength="41" lengthAdjust="spacingAndGlyphs" style="font-style:italic">Channel</text><text x="62.8" y="435.5" font-size="10" fill="#8a9fb8" text-anchor="middle" font-weight="normal"  textLength="22" lengthAdjust="spacingAndGlyphs" style="font-style:italic">South</text><text x="62.0" y="447.5" font-size="10" fill="#8a9fb8" text-anchor="middle" font-weight="normal"  textLength="19" lengthAdjust="spacingAndGlyphs" style="font-style:italic">Cove</text><text x="192.5" y="739.2" font-size="9.5" fill="#7b6080" text-anchor="middle" font-weight="normal" stroke="#f3e8f0" stroke-width="1.2" paint-order="stroke" stroke-linejoin="round"  textLength="37" lengthAdjust="spacingAndGlyphs" style="font-style:italic">Brooklyn</text><text x="192.5" y="751.1" font-size="9.5" fill="#7b6080" text-anchor="middle" font-weight="normal" stroke="#f3e8f0" stroke-width="1.2" paint-order="stroke" stroke-linejoin="round"  textLength="58" lengthAdjust="spacingAndGlyphs" style="font-style:italic">Port Authority</text><text x="192.5" y="763.0" font-size="9.5" fill="#7b6080" text-anchor="middle" font-weight="normal" stroke="#f3e8f0" stroke-width="1.2" paint-order="stroke" stroke-linejoin="round"  textLength="28" lengthAdjust="spacingAndGlyphs" style="font-style:italic">Marine</text><text x="192.5" y="774.9" font-size="9.5" fill="#7b6080" text-anchor="middle" font-weight="normal" stroke="#f3e8f0" stroke-width="1.2" paint-order="stroke" stroke-linejoin="round"  textLength="34" lengthAdjust="spacingAndGlyphs" style="font-style:italic">Terminal</text><text x="271.0" y="563.5" font-size="10" fill="#3f9a62" text-anchor="middle" font-weight="normal"  textLength="36.6" lengthAdjust="spacingAndGlyphs" style="font-style:italic">Brooklyn</text><text x="271.0" y="575.1" font-size="10" fill="#3f9a62" text-anchor="middle" font-weight="normal"  textLength="26" lengthAdjust="spacingAndGlyphs" style="font-style:italic">Bridge</text><text x="271.0" y="586.7" font-size="10" fill="#3f9a62" text-anchor="middle" font-weight="normal"  textLength="18.3" lengthAdjust="spacingAndGlyphs" style="font-style:italic">Park</text><text x="117.5" y="123.0" font-size="17" fill="#0092da" text-anchor="middle" font-weight="normal"  style="">P</text><text x="145.8" y="183.5" font-size="8.5" fill="#c04a68" text-anchor="middle" font-weight="normal"  style="font-style:italic">3</text><text x="103.0" y="374.0" font-size="8.5" fill="#c04a68" text-anchor="middle" font-weight="normal"  style="font-style:italic">2</text><text x="96.0" y="446.0" font-size="8.5" fill="#c04a68" text-anchor="middle" font-weight="normal"  style="font-style:italic">2</text><text x="190.0" y="238.0" font-size="8.5" fill="#c04a68" text-anchor="middle" font-weight="normal"  style="font-style:italic">1</text><text x="184.0" y="250.0" font-size="8.5" fill="#c04a68" text-anchor="middle" font-weight="normal"  style="font-style:italic">3</text><text x="331.0" y="535.0" font-size="8.5" fill="#c04a68" text-anchor="middle" font-weight="normal"  transform="rotate(-30 331.0 535.0)" style="font-style:italic">28A</text><text x="375.0" y="526.0" font-size="8.5" fill="#c04a68" text-anchor="middle" font-weight="normal"  transform="rotate(-8 375.0 526.0)" style="font-style:italic">28B</text><text x="281.0" y="680.0" font-size="8.5" fill="#c04a68" text-anchor="middle" font-weight="normal"  style="font-style:italic">27</text><text x="283.0" y="692.0" font-size="8.5" fill="#c04a68" text-anchor="middle" font-weight="normal"  style="font-style:italic">27</text><text x="327.0" y="418.0" font-size="8.5" fill="#c04a68" text-anchor="middle" font-weight="normal"  transform="rotate(-10 327.0 418.0)" style="font-style:italic">2</text><text x="236.0" y="457.0" font-size="8.5" fill="#c04a68" text-anchor="middle" font-weight="normal"  transform="rotate(-35 236.0 457.0)" style="font-style:italic">2</text><rect x="140.2" y="10" width="35.8" height="15.5" rx="2" fill="#fbd3c8" stroke="#e9a594" stroke-width="1"/><text x="158.1" y="21.8" font-size="10.5" fill="#3a3a3a" text-anchor="middle" font-weight="normal"  textLength="27" lengthAdjust="spacingAndGlyphs" style="">NY 9A</text><rect x="242.2" y="755" width="35.8" height="15" rx="2" fill="#f7c6d0" stroke="#e28aa0" stroke-width="1"/><text x="260.1" y="766.8" font-size="10.5" fill="#5a2030" text-anchor="middle" font-weight="bold"  textLength="22" lengthAdjust="spacingAndGlyphs" style="">I 278</text><ellipse cx="212" cy="358" rx="10" ry="3.5" fill="#000" opacity=".25" transform="rotate(-25 212 358)"/><g transform="translate(192.7,324)"><path d="M11.5,36.8 C10.5,30 1.2,20 1.2,11.5 A10.3,10.3 0 1 1 21.8,11.5 C21.8,20 12.5,30 11.5,36.8 Z" fill="#2caa28" stroke="#237f20" stroke-width="1.1"/><circle cx="11.5" cy="11.3" r="4.2" fill="#e9f7e6"/></g><rect x="10.8" y="11.5" width="30.2" height="57.6" rx="4.5" fill="#000" opacity=".22"/><rect x="12.8" y="13.5" width="26.2" height="53.6" rx="2.5" fill="#ffffff"/><rect x="12.8" y="39.8" width="26.2" height="1" fill="#ccc"/><path d="M20.8,26.5 h10.4 M26,21.3 v10.4" stroke="#111" stroke-width="2.1" fill="none"/><path d="M21,54.6 h10" stroke="#111" stroke-width="2.1" fill="none"/><rect x="247" y="766.5" width="160" height="16" fill="#ffffff" opacity=".82"/><rect x="251.9" y="770" width="11" height="4" fill="#4c7be1"/><rect x="251.9" y="774" width="11" height="4" fill="#ffd500"/><text x="266.6" y="778" font-size="11.2" fill="#0078a8" textLength="33.9" lengthAdjust="spacingAndGlyphs" style="font-family:'Liberation Sans',sans-serif">Leaflet</text><text x="304" y="778" font-size="11.2" fill="#333" style="font-family:'Liberation Sans',sans-serif">|</text><text x="309.3" y="778" font-size="11.2" fill="#333" style="font-family:'Liberation Sans',sans-serif">&#169;</text><text x="322" y="778" font-size="11.2" fill="#0078a8" textLength="79.5" lengthAdjust="spacingAndGlyphs" style="font-family:'Liberation Sans',sans-serif">OpenStreetMap</text></svg></div>
<div style="left:0.0px;top:1680.5px;width:1794.0px;height:1.0px;background:#292929;"></div>
<span style="left:367.60px;top:1722.06px;font-size:14px;font-weight:700;color:#ffffff;letter-spacing:-0.529px;">RideFlow</span>
<span style="left:367.60px;top:1743.94px;font-size:12px;font-weight:400;color:#a3a3a3;letter-spacing:0.151px;">&copy; 2026 All rights reserved.</span>
<span style="left:367.60px;top:1766.44px;font-size:12px;font-weight:400;color:#a3a3a3;letter-spacing:0.049px;">v2.2.3</span>
<svg style="left:404.6px;top:1766.5px;" width="11.5" height="11.5" viewBox="0 0 24 24" fill="none" stroke="#a3a3a3" stroke-width="2" stroke-linecap="round" stroke-linejoin="round"><path d="M15 3h6v6"/><path d="M10 14 21 3"/><path d="M18 13v6a2 2 0 0 1-2 2H5a2 2 0 0 1-2-2V8a2 2 0 0 1 2-2h6"/></svg>
<svg style="left:367.3px;top:1793.3px;" width="16" height="16" viewBox="0 0 24 24" fill="none" stroke="#9c9c9c" stroke-width="1.7" stroke-linecap="round" stroke-linejoin="round"><path d="M18 2h-3a5 5 0 0 0-5 5v3H7v4h3v8h4v-8h3l1-4h-4V7a1 1 0 0 1 1-1h3z"/></svg>
<svg style="left:389.8px;top:1793.3px;" width="16" height="16" viewBox="0 0 24 24" fill="none" stroke="#9c9c9c" stroke-width="1.7" stroke-linecap="round" stroke-linejoin="round"><path d="M22 4s-.7 2.100-2 3.400c1.600 10-9.400 17.300-18 11.600 2.200.1 4.400-.6 6-2C3 15.500.5 9.600 3 5c2.200 2.600 5.600 4.100 9 4-.9-4.200 4-6.600 7-3.800 1.100 0 3-1.200 3-1.200z"/></svg>
<svg style="left:412.6px;top:1793.3px;" width="16" height="16" viewBox="0 0 24 24" fill="none" stroke="#9c9c9c" stroke-width="1.7" stroke-linecap="round" stroke-linejoin="round"><rect width="20" height="20" x="2" y="2" rx="5" ry="5"/><path d="M16 11.370A4 4 0 1 1 12.630 8 4 4 0 0 1 16 11.370z"/><line x1="17.500" x2="17.510" y1="6.500" y2="6.500"/></svg>
<svg style="left:435.4px;top:1793.3px;" width="16" height="16" viewBox="0 0 24 24" fill="none" stroke="#9c9c9c" stroke-width="1.7" stroke-linecap="round" stroke-linejoin="round"><path d="M16 8a6 6 0 0 1 6 6v7h-4v-7a2 2 0 0 0-2-2 2 2 0 0 0-2 2v7h-4v-7a6 6 0 0 1 6-6z"/><rect width="4" height="12" x="2" y="9"/><circle cx="4" cy="4" r="2"/></svg>
<svg style="left:457.8px;top:1793.3px;" width="16" height="16" viewBox="0 0 24 24" fill="none" stroke="#9c9c9c" stroke-width="1.7" stroke-linecap="round" stroke-linejoin="round"><circle cx="8" cy="18" r="4"/><path d="M12 18V2l7 4"/></svg>
<svg style="left:481.0px;top:1793.3px;" width="16" height="16" viewBox="0 0 24 24" fill="none" stroke="#9c9c9c" stroke-width="1.7" stroke-linecap="round" stroke-linejoin="round"><path d="M2.500 17a24.120 24.120 0 0 1 0-10 2 2 0 0 1 1.400-1.400 49.560 49.560 0 0 1 16.200 0A2 2 0 0 1 21.500 7a24.120 24.120 0 0 1 0 10 2 2 0 0 1-1.400 1.400 49.550 49.550 0 0 1-16.200 0A2 2 0 0 1 2.500 17"/><path d="m10 15 5-3-5-3z"/></svg>
<span style="left:585.80px;top:1722.18px;font-size:11.5px;font-weight:700;color:#a8a8a8;letter-spacing:-0.297px;">LEGAL</span>
<span style="left:585.80px;top:1748.86px;font-size:14px;font-weight:400;color:#b4b4b4;letter-spacing:0.084px;">Terms of Service</span>
<span style="left:585.80px;top:1775.36px;font-size:14px;font-weight:400;color:#b4b4b4;letter-spacing:-0.046px;">Privacy Policy</span>
<span style="left:585.80px;top:1802.16px;font-size:14px;font-weight:400;color:#b4b4b4;letter-spacing:-0.168px;">Create New Page</span>
<span style="left:803.60px;top:1722.18px;font-size:11.5px;font-weight:700;color:#a8a8a8;letter-spacing:0.205px;">QUICK LINKS</span>
<span style="left:803.60px;top:1748.86px;font-size:14px;font-weight:400;color:#b4b4b4;letter-spacing:-0.025px;">Contact Us</span>
<span style="left:803.60px;top:1775.36px;font-size:14px;font-weight:400;color:#b4b4b4;">Track Booking</span>
<span style="left:803.60px;top:1802.16px;font-size:14px;font-weight:400;color:#b4b4b4;letter-spacing:0.036px;">Install App</span>
<span style="left:1021.20px;top:1722.18px;font-size:11.5px;font-weight:700;color:#a8a8a8;letter-spacing:0.096px;">DRIVERS</span>
<svg style="left:1020.9px;top:1749.3px;" width="14" height="14" viewBox="0 0 24 24" fill="none" stroke="#b4b4b4" stroke-width="1.8" stroke-linecap="round" stroke-linejoin="round"><path d="M19 17h2c.6 0 1-.4 1-1v-3c0-.9-.7-1.700-1.500-1.900C18.700 10.600 16 10 16 10s-1.300-1.400-2.200-2.300c-.5-.4-1.100-.7-1.800-.7H5c-.6 0-1.100.4-1.400.9l-1.400 2.900A3.700 3.700 0 0 0 2 12v4c0 .6.400 1 1 1h2"/><circle cx="7" cy="17" r="2"/><path d="M9 17h6"/><circle cx="17" cy="17" r="2"/></svg>
<span style="left:1040.70px;top:1748.86px;font-size:14px;font-weight:400;color:#b4b4b4;letter-spacing:-0.015px;">Driver Login</span>
<svg style="left:1238.5px;top:1720.8px;" width="13.5" height="13.5" viewBox="0 0 24 24" fill="none" stroke="#a8a8a8" stroke-width="1.8" stroke-linecap="round" stroke-linejoin="round"><circle cx="12" cy="12" r="10"/><path d="M12 2a14.500 14.500 0 0 0 0 20 14.500 14.500 0 0 0 0-20"/><path d="M2 12h20"/></svg>
<span style="left:1255.80px;top:1722.18px;font-size:11.5px;font-weight:700;color:#a8a8a8;letter-spacing:0.186px;">LANGUAGE</span>
<div style="left:1239px;top:1746.1px;width:186.8px;height:33.7px;border-radius:9px;border:1px solid #353535;background:#101010;"></div>
<span style="left:1251.40px;top:1758.58px;font-size:11.5px;font-weight:700;color:#e5e5e5;letter-spacing:-0.311px;">us</span>
<span style="left:1271.80px;top:1756.16px;font-size:14px;font-weight:400;color:#f5f5f5;letter-spacing:-0.175px;-webkit-text-stroke:0.25px #f5f5f5;">English</span>
<svg style="left:1398.9px;top:1756.2px;" width="14" height="14" viewBox="0 0 24 24" fill="none" stroke="#a3a3a3" stroke-width="2" stroke-linecap="round" stroke-linejoin="round"><path d="m6 9 6 6 6-6"/></svg>
<span class="serif" style="left:1609.90px;top:1798.90px;font-size:17.6px;font-weight:400;color:#868686;transform:scaleX(1.1493);transform-origin:0 50%;text-shadow:1.2px 1.2px 0 #000;">BIGMONEY.VIP</span>
</div>
</body></html>
